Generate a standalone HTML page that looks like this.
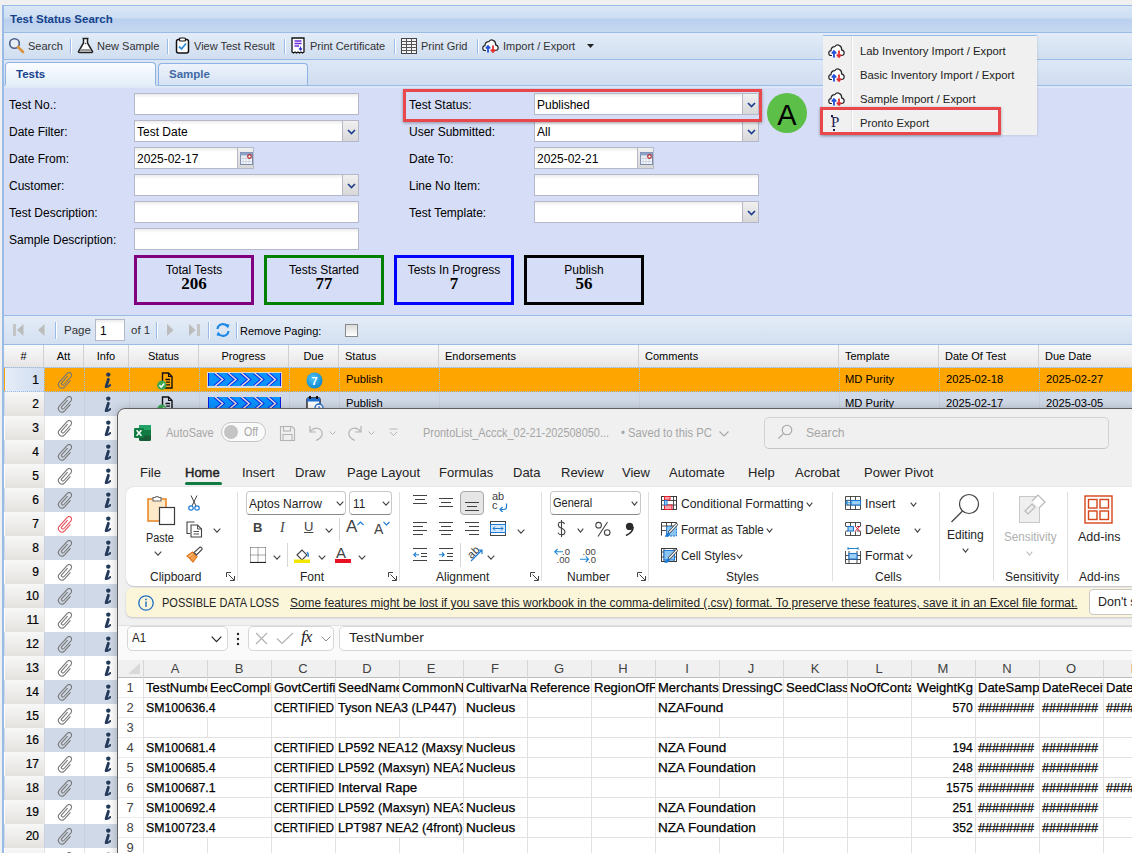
<!DOCTYPE html>
<html><head><meta charset="utf-8">
<style>
*{box-sizing:border-box;margin:0;padding:0}
html,body{width:1132px;height:853px;overflow:hidden;background:#f0f0f0;font-family:"Liberation Sans",sans-serif;font-size:12px;color:#000}
.a{position:absolute;white-space:nowrap}
#panel{position:absolute;left:2px;top:5px;width:1140px;height:860px;border-left:1px solid #99bbe8;border-top:1px solid #99bbe8;background:#d6dcf6}
#hdr{left:3px;top:6px;width:1129px;height:27px;background:linear-gradient(#dae7f6 0,#cddef3 45%,#b9d0ee 50%,#c6d9f1 100%);border-bottom:1px solid #99bbe8}
#hdr span{position:absolute;left:7px;top:7px;font-weight:bold;font-size:11.5px;color:#15428b}
#tb{left:3px;top:33px;width:1129px;height:27px;background:linear-gradient(#e3ecf8,#d0def0);border-bottom:1px solid #99bbe8}
.tbt{position:absolute;top:7px;font-size:11px;color:#333}
.sep{position:absolute;top:6px;width:1px;height:15px;background:#99bbe8;box-shadow:1px 0 0 #fff}
#tabs{left:3px;top:60px;width:1129px;height:28px;background:linear-gradient(#dde8f6,#cfdcef)}
.tab{position:absolute;top:2px;height:26px;border:1px solid #8db2e3;border-bottom:none;border-radius:4px 4px 0 0;background:linear-gradient(#f3f7fd,#d9e6f7)}
.tab span{position:absolute;left:10px;top:7px;font-weight:bold;font-size:11.5px;color:#15428b}
#form{left:3px;top:88px;width:1129px;height:228px;background:#d6ddf6;border-bottom:1px solid #99bbe8}
.lbl{position:absolute;font-size:12px;color:#000}
.inp{position:absolute;height:22px;background:#fff;border:1px solid #b5b8c8;background:linear-gradient(#ececec 0,#fff 4px)}
.inp span{position:absolute;left:2px;top:4px;font-size:12px}
.trig{position:absolute;right:-1px;top:-1px;width:17px;height:22px;background:linear-gradient(#f0f0f0,#d8d8d8);border:1px solid #b5b8c8}
.ex{line-height:normal}
.cell{font-size:13px;line-height:15px;color:#000;-webkit-text-stroke:0.25px #000;white-space:nowrap;display:inline-block;transform-origin:left center}
</style></head><body>
<div id="panel"></div>
<div class="a" id="hdr"><span>Test Status Search</span></div>
<div class="a" id="tb">
 <svg class="a" style="left:5px;top:4px" width="17" height="17" viewBox="0 0 17 17"><circle cx="6.5" cy="6.5" r="4.8" fill="#e8eef5" stroke="#4a5f8a" stroke-width="1.6"/><path d="M10 10 L15 15" stroke="#d9953f" stroke-width="2.6" stroke-linecap="round"/></svg>
 <span class="tbt" style="left:25px">Search</span>
 <div class="sep" style="left:67px"></div>
 <svg class="a" style="left:74px;top:4px" width="17" height="17" viewBox="0 0 17 17"><path d="M5.5 1.5 H11.5 M6.5 1.5 V6 L1.5 14.5 Q1.2 15.5 2.5 15.5 H14.5 Q15.8 15.5 15.5 14.5 L10.5 6 V1.5" fill="#fff" stroke="#222" stroke-width="1.5"/><path d="M3.5 12 H13.5 L14.5 14.5 H2.5Z" fill="#999"/><circle cx="8.5" cy="6.5" r="0.8" fill="#555"/></svg>
 <span class="tbt" style="left:94px">New Sample</span>
 <div class="sep" style="left:164px"></div>
 <svg class="a" style="left:172px;top:4px" width="15" height="17" viewBox="0 0 15 17"><rect x="1.5" y="2.5" width="12" height="13.5" rx="2" fill="#fff" stroke="#111" stroke-width="1.5"/><rect x="4.5" y="1" width="6" height="3" rx="1" fill="#fff" stroke="#111" stroke-width="1.2"/><path d="M4 9.5 L6.5 12 L11 6.5" fill="none" stroke="#2e8fe0" stroke-width="1.8"/></svg>
 <span class="tbt" style="left:191px">View Test Result</span>
 <div class="sep" style="left:281px"></div>
 <svg class="a" style="left:288px;top:4px" width="14" height="17" viewBox="0 0 14 17"><path d="M1 1 H13 V15 L11.5 16 L10 15 L8.5 16 L7 15 L5.5 16 L4 15 L2.5 16 L1 15Z" fill="#fff" stroke="#111" stroke-width="1.3"/><path d="M3.5 4 H10.5 M3.5 6.5 H10.5 M3.5 9 H8" stroke="#6a2bd9" stroke-width="1.3"/><path d="M9.5 9.5 V13 M8 11.5 L9.5 13 L11 11.5" fill="none" stroke="#3030d0" stroke-width="1.2"/></svg>
 <span class="tbt" style="left:307px">Print Certificate</span>
 <div class="sep" style="left:391px"></div>
 <svg class="a" style="left:398px;top:4px" width="16" height="17" viewBox="0 0 16 17"><rect x="0.5" y="1.5" width="15" height="15" fill="#f4f4f4" stroke="#444"/><path d="M0.5 4.5 H15.5 M0.5 7.5 H15.5 M0.5 10.5 H15.5 M0.5 13.5 H15.5 M5.5 1.5 V16.5 M10.5 1.5 V16.5" stroke="#555" stroke-width="1"/></svg>
 <span class="tbt" style="left:418px">Print Grid</span>
 <div class="sep" style="left:474px"></div>
 <svg class="a" style="left:479px;top:5px" width="17" height="15" viewBox="0 0 17 15"><path d="M4 12.5 H2.8 Q0.8 12.5 0.8 10 Q0.8 7.8 3 7.6 Q3 3.8 6.8 3.6 Q8.8 1 11.5 2.6 Q14 3.8 13.6 6.8 Q16.2 7.4 16.2 10 Q16 12.5 13.5 12.5 H13" fill="#fff" stroke="#222" stroke-width="1.2"/><path d="M6 14.5 V8.5 M3.8 10.5 L6 8 L8.2 10.5" fill="none" stroke="#1e4fd8" stroke-width="1.8"/><path d="M11 7.5 V13.5 M8.8 11.5 L11 14 L13.2 11.5" fill="none" stroke="#e03030" stroke-width="1.8"/></svg>
 <span class="tbt" style="left:500px">Import / Export</span>
 <svg class="a" style="left:584px;top:11px" width="7" height="4" viewBox="0 0 7 4"><path d="M0 0 H7 L3.5 4Z" fill="#222"/></svg>
</div>
<div class="a" id="tabs">
 <div class="tab" style="left:2px;width:151px;height:24px;background:linear-gradient(#fbfdff,#e3edf9)"><span style="top:5px">Tests</span></div>
 <div class="tab" style="left:155px;width:150px;height:23px;top:3px;background:linear-gradient(#eef3fb,#d5e2f4)"><span style="left:10px;top:4px;color:#416aa5">Sample</span></div>
 <div style="position:absolute;left:0;top:25px;width:1129px;height:1px;background:#99bbe8"></div>
 <div style="position:absolute;left:0;top:26px;width:1129px;height:2px;background:#dfe8f6"></div>
 <div style="position:absolute;left:2px;top:25px;width:151px;height:1px;background:#e3edf9"></div>
</div>
<div class="a" id="form"></div>
<span class="a lbl" style="left:9px;top:98px">Test No.:</span>
<span class="a lbl" style="left:9px;top:125px">Date Filter:</span>
<span class="a lbl" style="left:9px;top:152px">Date From:</span>
<span class="a lbl" style="left:9px;top:179px">Customer:</span>
<span class="a lbl" style="left:9px;top:206px">Test Description:</span>
<span class="a lbl" style="left:9px;top:233px">Sample Description:</span>
<div class="inp" style="left:134px;top:93px;width:225px"></div><div class="inp" style="left:134px;top:120px;width:225px"><span>Test Date</span><div class="trig"><svg style="position:absolute;left:4px;top:8px" width="9" height="6" viewBox="0 0 9 6"><path d="M1 1 L4.5 4.5 L8 1" fill="none" stroke="#1f3f8f" stroke-width="1.7"/></svg></div></div><div class="inp" style="left:134px;top:147px;width:120px"><span>2025-02-17</span><div class="trig"><svg style="position:absolute;left:2px;top:4px" width="13" height="13" viewBox="0 0 13 13"><rect x="0.5" y="0.5" width="12" height="12" fill="#f4f6fa" stroke="#7a8aa8"/><rect x="0.5" y="0.5" width="12" height="3" fill="#8ea2c8"/><path d="M3 3.5 V12 M6 3.5 V12 M9 3.5 V12 M0.5 6.5 H12 M0.5 9.5 H12" stroke="#c8d0e0" stroke-width="0.8"/><circle cx="9.5" cy="4.5" r="1.8" fill="#fff" stroke="#b02020" stroke-width="1.2"/></svg></div></div><div class="inp" style="left:134px;top:174px;width:225px"><div class="trig"><svg style="position:absolute;left:4px;top:8px" width="9" height="6" viewBox="0 0 9 6"><path d="M1 1 L4.5 4.5 L8 1" fill="none" stroke="#1f3f8f" stroke-width="1.7"/></svg></div></div><div class="inp" style="left:134px;top:201px;width:225px"></div><div class="inp" style="left:134px;top:228px;width:225px"></div><span class="a lbl" style="left:409px;top:98px">Test Status:</span>
<span class="a lbl" style="left:409px;top:125px">User Submitted:</span>
<span class="a lbl" style="left:409px;top:152px">Date To:</span>
<span class="a lbl" style="left:409px;top:179px">Line No Item:</span>
<span class="a lbl" style="left:409px;top:206px">Test Template:</span>
<div class="inp" style="left:534px;top:93px;width:225px"><span>Published</span><div class="trig"><svg style="position:absolute;left:4px;top:8px" width="9" height="6" viewBox="0 0 9 6"><path d="M1 1 L4.5 4.5 L8 1" fill="none" stroke="#1f3f8f" stroke-width="1.7"/></svg></div></div><div class="inp" style="left:534px;top:120px;width:225px"><span>All</span><div class="trig"><svg style="position:absolute;left:4px;top:8px" width="9" height="6" viewBox="0 0 9 6"><path d="M1 1 L4.5 4.5 L8 1" fill="none" stroke="#1f3f8f" stroke-width="1.7"/></svg></div></div><div class="inp" style="left:534px;top:147px;width:120px"><span>2025-02-21</span><div class="trig"><svg style="position:absolute;left:2px;top:4px" width="13" height="13" viewBox="0 0 13 13"><rect x="0.5" y="0.5" width="12" height="12" fill="#f4f6fa" stroke="#7a8aa8"/><rect x="0.5" y="0.5" width="12" height="3" fill="#8ea2c8"/><path d="M3 3.5 V12 M6 3.5 V12 M9 3.5 V12 M0.5 6.5 H12 M0.5 9.5 H12" stroke="#c8d0e0" stroke-width="0.8"/><circle cx="9.5" cy="4.5" r="1.8" fill="#fff" stroke="#b02020" stroke-width="1.2"/></svg></div></div><div class="inp" style="left:534px;top:174px;width:225px"></div><div class="inp" style="left:534px;top:201px;width:225px"><div class="trig"><svg style="position:absolute;left:4px;top:8px" width="9" height="6" viewBox="0 0 9 6"><path d="M1 1 L4.5 4.5 L8 1" fill="none" stroke="#1f3f8f" stroke-width="1.7"/></svg></div></div><div class="a" style="left:403px;top:89px;width:359px;height:33px;border:3px solid #e8474c;box-shadow:0 1px 3px rgba(0,0,0,.35)"></div>
<div class="a" style="left:767px;top:93px;width:40px;height:40px;border-radius:50%;background:#5cbf48"><span style="position:absolute;left:0;width:40px;top:6px;text-align:center;font-size:29px;color:#000">A</span></div>
<div class="a" style="left:134px;top:255px;width:120px;height:50px;border:3px solid #800080"><span style="position:absolute;left:0;width:114px;top:5px;text-align:center;font-size:12px">Total Tests</span><span style="position:absolute;left:0;width:114px;top:16px;text-align:center;font-size:17px;font-weight:bold;font-family:'Liberation Serif',serif">206</span></div>
<div class="a" style="left:264px;top:255px;width:120px;height:50px;border:3px solid #008000"><span style="position:absolute;left:0;width:114px;top:5px;text-align:center;font-size:12px">Tests Started</span><span style="position:absolute;left:0;width:114px;top:16px;text-align:center;font-size:17px;font-weight:bold;font-family:'Liberation Serif',serif">77</span></div>
<div class="a" style="left:394px;top:255px;width:120px;height:50px;border:3px solid #0000ff"><span style="position:absolute;left:0;width:114px;top:5px;text-align:center;font-size:12px">Tests In Progress</span><span style="position:absolute;left:0;width:114px;top:16px;text-align:center;font-size:17px;font-weight:bold;font-family:'Liberation Serif',serif">7</span></div>
<div class="a" style="left:524px;top:255px;width:120px;height:50px;border:3px solid #000"><span style="position:absolute;left:0;width:114px;top:5px;text-align:center;font-size:12px">Publish</span><span style="position:absolute;left:0;width:114px;top:16px;text-align:center;font-size:17px;font-weight:bold;font-family:'Liberation Serif',serif">56</span></div>
<div class="a" id="pg" style="left:3px;top:316px;width:1129px;height:29px;background:linear-gradient(#e4ecf7,#d3e0f1);border-bottom:1px solid #99bbe8">
 <svg class="a" style="left:10px;top:8px" width="11" height="12" viewBox="0 0 11 12"><rect x="0" y="0" width="3" height="12" fill="#c4c4c4"/><path d="M4 6 L10.5 0 V12Z" fill="#bcbcbc"/></svg>
 <svg class="a" style="left:35px;top:8px" width="7" height="12" viewBox="0 0 7 12"><path d="M0 6 L6.5 0 V12Z" fill="#bcbcbc"/></svg>
 <div class="sep" style="left:52px;top:6px;height:17px"></div>
 <span class="tbt" style="left:61px;top:8px;font-size:11.5px;color:#333">Page</span>
 <div class="inp" style="left:92px;top:3px;width:30px;height:22px"><span style="left:4px;top:4px">1</span></div>
 <span class="tbt" style="left:128px;top:8px;font-size:11.5px;color:#333">of 1</span>
 <div class="sep" style="left:153px;top:6px;height:17px"></div>
 <svg class="a" style="left:164px;top:8px" width="7" height="12" viewBox="0 0 7 12"><path d="M6.5 6 L0 0 V12Z" fill="#bcbcbc"/></svg>
 <svg class="a" style="left:186px;top:8px" width="11" height="12" viewBox="0 0 11 12"><rect x="8" y="0" width="3" height="12" fill="#c4c4c4"/><path d="M6.5 6 L0 0 V12Z" fill="#bcbcbc"/></svg>
 <div class="sep" style="left:205px;top:6px;height:17px"></div>
 <svg class="a" style="left:212px;top:6px" width="16" height="16" viewBox="0 0 16 16"><path d="M2.5 7 A5.5 5.5 0 0 1 12.5 4.5" fill="none" stroke="#1e88e5" stroke-width="2.2"/><path d="M10 2 L14.5 2.5 L13 6.5Z" fill="#1e88e5"/><path d="M13.5 9 A5.5 5.5 0 0 1 3.5 11.5" fill="none" stroke="#1e88e5" stroke-width="2.2"/><path d="M6 14 L1.5 13.5 L3 9.5Z" fill="#1e88e5"/></svg>
 <div class="sep" style="left:233px;top:6px;height:17px"></div>
 <span class="tbt" style="left:237px;top:9px;font-size:11px;color:#000">Remove Paging:</span>
 <div class="a" style="left:342px;top:8px;width:13px;height:13px;border:1px solid #8a8a8a;background:linear-gradient(#dcdcdc,#fff)"></div>
</div>
<div class="a" style="left:4px;top:345px;width:1128px;height:23px;background:linear-gradient(#f9f9f9,#e6e6e6);border-bottom:1px solid #d0d0d0"></div>
<div class="a" style="left:4px;top:345px;width:40px;height:23px;border-right:1px solid #d0d0d0;text-align:center"><span style="position:relative;top:4px;font-size:11px">#</span></div>
<div class="a" style="left:44px;top:345px;width:40px;height:23px;border-right:1px solid #d0d0d0;text-align:center"><span style="position:relative;top:4px;font-size:11px">Att</span></div>
<div class="a" style="left:84px;top:345px;width:45px;height:23px;border-right:1px solid #d0d0d0;text-align:center"><span style="position:relative;top:4px;font-size:11px">Info</span></div>
<div class="a" style="left:129px;top:345px;width:70px;height:23px;border-right:1px solid #d0d0d0;text-align:center"><span style="position:relative;top:4px;font-size:11px">Status</span></div>
<div class="a" style="left:199px;top:345px;width:90px;height:23px;border-right:1px solid #d0d0d0;text-align:center"><span style="position:relative;top:4px;font-size:11px">Progress</span></div>
<div class="a" style="left:289px;top:345px;width:50px;height:23px;border-right:1px solid #d0d0d0;text-align:center"><span style="position:relative;top:4px;font-size:11px">Due</span></div>
<div class="a" style="left:339px;top:345px;width:100px;height:23px;border-right:1px solid #d0d0d0"><span style="position:absolute;left:6px;top:5px;font-size:11px">Status</span></div>
<div class="a" style="left:439px;top:345px;width:200px;height:23px;border-right:1px solid #d0d0d0"><span style="position:absolute;left:6px;top:5px;font-size:11px">Endorsements</span></div>
<div class="a" style="left:639px;top:345px;width:200px;height:23px;border-right:1px solid #d0d0d0"><span style="position:absolute;left:6px;top:5px;font-size:11px">Comments</span></div>
<div class="a" style="left:839px;top:345px;width:100px;height:23px;border-right:1px solid #d0d0d0"><span style="position:absolute;left:6px;top:5px;font-size:11px">Template</span></div>
<div class="a" style="left:939px;top:345px;width:100px;height:23px;border-right:1px solid #d0d0d0"><span style="position:absolute;left:6px;top:5px;font-size:11px">Date Of Test</span></div>
<div class="a" style="left:1039px;top:345px;width:101px;height:23px;border-right:1px solid #d0d0d0"><span style="position:absolute;left:6px;top:5px;font-size:11px">Due Date</span></div>
<div class="a" style="left:4px;top:368px;width:1128px;height:24px;background:#ffa500"></div><div class="a" style="left:5px;top:368px;width:39px;height:24px;background:linear-gradient(to right,#e5edf8,#cfdcef)"><span style="position:absolute;right:5px;top:5px;font-size:12px;-webkit-text-stroke:0.2px #000">1</span></div><div class="a" style="left:44px;top:368px;width:0;height:24px;border-left:1px dotted #a9c3e6"></div><div class="a" style="left:84px;top:368px;width:0;height:24px;border-left:1px dotted #a9c3e6"></div><div class="a" style="left:129px;top:368px;width:0;height:24px;border-left:1px dotted #a9c3e6"></div><div class="a" style="left:199px;top:368px;width:0;height:24px;border-left:1px dotted #a9c3e6"></div><div class="a" style="left:289px;top:368px;width:0;height:24px;border-left:1px dotted #a9c3e6"></div><div class="a" style="left:339px;top:368px;width:0;height:24px;border-left:1px dotted #a9c3e6"></div><div class="a" style="left:439px;top:368px;width:0;height:24px;border-left:1px dotted #a9c3e6"></div><div class="a" style="left:639px;top:368px;width:0;height:24px;border-left:1px dotted #a9c3e6"></div><div class="a" style="left:839px;top:368px;width:0;height:24px;border-left:1px dotted #a9c3e6"></div><div class="a" style="left:939px;top:368px;width:0;height:24px;border-left:1px dotted #a9c3e6"></div><div class="a" style="left:1039px;top:368px;width:0;height:24px;border-left:1px dotted #a9c3e6"></div><svg class="a" style="left:57px;top:372px" width="17" height="17" viewBox="0 0 17 17"><path transform="translate(8.5 8.6) rotate(42) translate(-5 -9.7)" d="M3.6 5 V13.6 A1.45 1.45 0 0 0 6.5 13.6 V3.2 A2.5 2.5 0 0 0 1.5 3.2 V15 A3.5 3.5 0 0 0 8.5 15 V6.2" fill="none" stroke="#777" stroke-width="1.1"/></svg><svg class="a" style="left:103px;top:372px" width="8" height="17" viewBox="0 0 8 17"><circle cx="5.3" cy="2.6" r="2.2" fill="#233a5a"/><path d="M5.4 7.3 L3.3 14.2" stroke="#233a5a" stroke-width="2.9" stroke-linecap="round"/><path d="M2.6 15 Q5 15.3 7.4 12.9" fill="none" stroke="#233a5a" stroke-width="1.9" stroke-linecap="round"/></svg>
<div class="a" style="left:4px;top:392px;width:1128px;height:24px;background:#d0d9e7"></div><div class="a" style="left:5px;top:392px;width:39px;height:24px;background:linear-gradient(#f7f7f7,#e4e2df)"><span style="position:absolute;right:5px;top:5px;font-size:12px;-webkit-text-stroke:0.2px #000">2</span></div><div class="a" style="left:44px;top:392px;width:1px;height:24px;background:#c8d0dc"></div><div class="a" style="left:84px;top:392px;width:1px;height:24px;background:#c8d0dc"></div><div class="a" style="left:129px;top:392px;width:1px;height:24px;background:#c8d0dc"></div><div class="a" style="left:199px;top:392px;width:1px;height:24px;background:#c8d0dc"></div><div class="a" style="left:289px;top:392px;width:1px;height:24px;background:#c8d0dc"></div><div class="a" style="left:339px;top:392px;width:1px;height:24px;background:#c8d0dc"></div><div class="a" style="left:439px;top:392px;width:1px;height:24px;background:#c8d0dc"></div><div class="a" style="left:639px;top:392px;width:1px;height:24px;background:#c8d0dc"></div><div class="a" style="left:839px;top:392px;width:1px;height:24px;background:#c8d0dc"></div><div class="a" style="left:939px;top:392px;width:1px;height:24px;background:#c8d0dc"></div><div class="a" style="left:1039px;top:392px;width:1px;height:24px;background:#c8d0dc"></div><svg class="a" style="left:57px;top:396px" width="17" height="17" viewBox="0 0 17 17"><path transform="translate(8.5 8.6) rotate(42) translate(-5 -9.7)" d="M3.6 5 V13.6 A1.45 1.45 0 0 0 6.5 13.6 V3.2 A2.5 2.5 0 0 0 1.5 3.2 V15 A3.5 3.5 0 0 0 8.5 15 V6.2" fill="none" stroke="#777" stroke-width="1.1"/></svg><svg class="a" style="left:103px;top:396px" width="8" height="17" viewBox="0 0 8 17"><circle cx="5.3" cy="2.6" r="2.2" fill="#233a5a"/><path d="M5.4 7.3 L3.3 14.2" stroke="#233a5a" stroke-width="2.9" stroke-linecap="round"/><path d="M2.6 15 Q5 15.3 7.4 12.9" fill="none" stroke="#233a5a" stroke-width="1.9" stroke-linecap="round"/></svg>
<div class="a" style="left:4px;top:416px;width:1128px;height:24px;background:#ffffff"></div><div class="a" style="left:5px;top:416px;width:39px;height:24px;background:linear-gradient(#f7f7f7,#e4e2df)"><span style="position:absolute;right:5px;top:5px;font-size:12px;-webkit-text-stroke:0.2px #000">3</span></div><div class="a" style="left:44px;top:416px;width:1px;height:24px;background:#e3e3e3"></div><div class="a" style="left:84px;top:416px;width:1px;height:24px;background:#e3e3e3"></div><div class="a" style="left:129px;top:416px;width:1px;height:24px;background:#e3e3e3"></div><div class="a" style="left:199px;top:416px;width:1px;height:24px;background:#e3e3e3"></div><div class="a" style="left:289px;top:416px;width:1px;height:24px;background:#e3e3e3"></div><div class="a" style="left:339px;top:416px;width:1px;height:24px;background:#e3e3e3"></div><div class="a" style="left:439px;top:416px;width:1px;height:24px;background:#e3e3e3"></div><div class="a" style="left:639px;top:416px;width:1px;height:24px;background:#e3e3e3"></div><div class="a" style="left:839px;top:416px;width:1px;height:24px;background:#e3e3e3"></div><div class="a" style="left:939px;top:416px;width:1px;height:24px;background:#e3e3e3"></div><div class="a" style="left:1039px;top:416px;width:1px;height:24px;background:#e3e3e3"></div><svg class="a" style="left:57px;top:420px" width="17" height="17" viewBox="0 0 17 17"><path transform="translate(8.5 8.6) rotate(42) translate(-5 -9.7)" d="M3.6 5 V13.6 A1.45 1.45 0 0 0 6.5 13.6 V3.2 A2.5 2.5 0 0 0 1.5 3.2 V15 A3.5 3.5 0 0 0 8.5 15 V6.2" fill="none" stroke="#777" stroke-width="1.1"/></svg><svg class="a" style="left:103px;top:420px" width="8" height="17" viewBox="0 0 8 17"><circle cx="5.3" cy="2.6" r="2.2" fill="#233a5a"/><path d="M5.4 7.3 L3.3 14.2" stroke="#233a5a" stroke-width="2.9" stroke-linecap="round"/><path d="M2.6 15 Q5 15.3 7.4 12.9" fill="none" stroke="#233a5a" stroke-width="1.9" stroke-linecap="round"/></svg>
<div class="a" style="left:4px;top:440px;width:1128px;height:24px;background:#d0d9e7"></div><div class="a" style="left:5px;top:440px;width:39px;height:24px;background:linear-gradient(#f7f7f7,#e4e2df)"><span style="position:absolute;right:5px;top:5px;font-size:12px;-webkit-text-stroke:0.2px #000">4</span></div><div class="a" style="left:44px;top:440px;width:1px;height:24px;background:#c8d0dc"></div><div class="a" style="left:84px;top:440px;width:1px;height:24px;background:#c8d0dc"></div><div class="a" style="left:129px;top:440px;width:1px;height:24px;background:#c8d0dc"></div><div class="a" style="left:199px;top:440px;width:1px;height:24px;background:#c8d0dc"></div><div class="a" style="left:289px;top:440px;width:1px;height:24px;background:#c8d0dc"></div><div class="a" style="left:339px;top:440px;width:1px;height:24px;background:#c8d0dc"></div><div class="a" style="left:439px;top:440px;width:1px;height:24px;background:#c8d0dc"></div><div class="a" style="left:639px;top:440px;width:1px;height:24px;background:#c8d0dc"></div><div class="a" style="left:839px;top:440px;width:1px;height:24px;background:#c8d0dc"></div><div class="a" style="left:939px;top:440px;width:1px;height:24px;background:#c8d0dc"></div><div class="a" style="left:1039px;top:440px;width:1px;height:24px;background:#c8d0dc"></div><svg class="a" style="left:57px;top:444px" width="17" height="17" viewBox="0 0 17 17"><path transform="translate(8.5 8.6) rotate(42) translate(-5 -9.7)" d="M3.6 5 V13.6 A1.45 1.45 0 0 0 6.5 13.6 V3.2 A2.5 2.5 0 0 0 1.5 3.2 V15 A3.5 3.5 0 0 0 8.5 15 V6.2" fill="none" stroke="#777" stroke-width="1.1"/></svg><svg class="a" style="left:103px;top:444px" width="8" height="17" viewBox="0 0 8 17"><circle cx="5.3" cy="2.6" r="2.2" fill="#233a5a"/><path d="M5.4 7.3 L3.3 14.2" stroke="#233a5a" stroke-width="2.9" stroke-linecap="round"/><path d="M2.6 15 Q5 15.3 7.4 12.9" fill="none" stroke="#233a5a" stroke-width="1.9" stroke-linecap="round"/></svg>
<div class="a" style="left:4px;top:464px;width:1128px;height:24px;background:#ffffff"></div><div class="a" style="left:5px;top:464px;width:39px;height:24px;background:linear-gradient(#f7f7f7,#e4e2df)"><span style="position:absolute;right:5px;top:5px;font-size:12px;-webkit-text-stroke:0.2px #000">5</span></div><div class="a" style="left:44px;top:464px;width:1px;height:24px;background:#e3e3e3"></div><div class="a" style="left:84px;top:464px;width:1px;height:24px;background:#e3e3e3"></div><div class="a" style="left:129px;top:464px;width:1px;height:24px;background:#e3e3e3"></div><div class="a" style="left:199px;top:464px;width:1px;height:24px;background:#e3e3e3"></div><div class="a" style="left:289px;top:464px;width:1px;height:24px;background:#e3e3e3"></div><div class="a" style="left:339px;top:464px;width:1px;height:24px;background:#e3e3e3"></div><div class="a" style="left:439px;top:464px;width:1px;height:24px;background:#e3e3e3"></div><div class="a" style="left:639px;top:464px;width:1px;height:24px;background:#e3e3e3"></div><div class="a" style="left:839px;top:464px;width:1px;height:24px;background:#e3e3e3"></div><div class="a" style="left:939px;top:464px;width:1px;height:24px;background:#e3e3e3"></div><div class="a" style="left:1039px;top:464px;width:1px;height:24px;background:#e3e3e3"></div><svg class="a" style="left:57px;top:468px" width="17" height="17" viewBox="0 0 17 17"><path transform="translate(8.5 8.6) rotate(42) translate(-5 -9.7)" d="M3.6 5 V13.6 A1.45 1.45 0 0 0 6.5 13.6 V3.2 A2.5 2.5 0 0 0 1.5 3.2 V15 A3.5 3.5 0 0 0 8.5 15 V6.2" fill="none" stroke="#777" stroke-width="1.1"/></svg><svg class="a" style="left:103px;top:468px" width="8" height="17" viewBox="0 0 8 17"><circle cx="5.3" cy="2.6" r="2.2" fill="#233a5a"/><path d="M5.4 7.3 L3.3 14.2" stroke="#233a5a" stroke-width="2.9" stroke-linecap="round"/><path d="M2.6 15 Q5 15.3 7.4 12.9" fill="none" stroke="#233a5a" stroke-width="1.9" stroke-linecap="round"/></svg>
<div class="a" style="left:4px;top:488px;width:1128px;height:24px;background:#d0d9e7"></div><div class="a" style="left:5px;top:488px;width:39px;height:24px;background:linear-gradient(#f7f7f7,#e4e2df)"><span style="position:absolute;right:5px;top:5px;font-size:12px;-webkit-text-stroke:0.2px #000">6</span></div><div class="a" style="left:44px;top:488px;width:1px;height:24px;background:#c8d0dc"></div><div class="a" style="left:84px;top:488px;width:1px;height:24px;background:#c8d0dc"></div><div class="a" style="left:129px;top:488px;width:1px;height:24px;background:#c8d0dc"></div><div class="a" style="left:199px;top:488px;width:1px;height:24px;background:#c8d0dc"></div><div class="a" style="left:289px;top:488px;width:1px;height:24px;background:#c8d0dc"></div><div class="a" style="left:339px;top:488px;width:1px;height:24px;background:#c8d0dc"></div><div class="a" style="left:439px;top:488px;width:1px;height:24px;background:#c8d0dc"></div><div class="a" style="left:639px;top:488px;width:1px;height:24px;background:#c8d0dc"></div><div class="a" style="left:839px;top:488px;width:1px;height:24px;background:#c8d0dc"></div><div class="a" style="left:939px;top:488px;width:1px;height:24px;background:#c8d0dc"></div><div class="a" style="left:1039px;top:488px;width:1px;height:24px;background:#c8d0dc"></div><svg class="a" style="left:57px;top:492px" width="17" height="17" viewBox="0 0 17 17"><path transform="translate(8.5 8.6) rotate(42) translate(-5 -9.7)" d="M3.6 5 V13.6 A1.45 1.45 0 0 0 6.5 13.6 V3.2 A2.5 2.5 0 0 0 1.5 3.2 V15 A3.5 3.5 0 0 0 8.5 15 V6.2" fill="none" stroke="#777" stroke-width="1.1"/></svg><svg class="a" style="left:103px;top:492px" width="8" height="17" viewBox="0 0 8 17"><circle cx="5.3" cy="2.6" r="2.2" fill="#233a5a"/><path d="M5.4 7.3 L3.3 14.2" stroke="#233a5a" stroke-width="2.9" stroke-linecap="round"/><path d="M2.6 15 Q5 15.3 7.4 12.9" fill="none" stroke="#233a5a" stroke-width="1.9" stroke-linecap="round"/></svg>
<div class="a" style="left:4px;top:512px;width:1128px;height:24px;background:#ffffff"></div><div class="a" style="left:5px;top:512px;width:39px;height:24px;background:linear-gradient(#f7f7f7,#e4e2df)"><span style="position:absolute;right:5px;top:5px;font-size:12px;-webkit-text-stroke:0.2px #000">7</span></div><div class="a" style="left:44px;top:512px;width:1px;height:24px;background:#e3e3e3"></div><div class="a" style="left:84px;top:512px;width:1px;height:24px;background:#e3e3e3"></div><div class="a" style="left:129px;top:512px;width:1px;height:24px;background:#e3e3e3"></div><div class="a" style="left:199px;top:512px;width:1px;height:24px;background:#e3e3e3"></div><div class="a" style="left:289px;top:512px;width:1px;height:24px;background:#e3e3e3"></div><div class="a" style="left:339px;top:512px;width:1px;height:24px;background:#e3e3e3"></div><div class="a" style="left:439px;top:512px;width:1px;height:24px;background:#e3e3e3"></div><div class="a" style="left:639px;top:512px;width:1px;height:24px;background:#e3e3e3"></div><div class="a" style="left:839px;top:512px;width:1px;height:24px;background:#e3e3e3"></div><div class="a" style="left:939px;top:512px;width:1px;height:24px;background:#e3e3e3"></div><div class="a" style="left:1039px;top:512px;width:1px;height:24px;background:#e3e3e3"></div><svg class="a" style="left:57px;top:516px" width="17" height="17" viewBox="0 0 17 17"><path transform="translate(8.5 8.6) rotate(42) translate(-5 -9.7)" d="M3.6 5 V13.6 A1.45 1.45 0 0 0 6.5 13.6 V3.2 A2.5 2.5 0 0 0 1.5 3.2 V15 A3.5 3.5 0 0 0 8.5 15 V6.2" fill="none" stroke="#e8505b" stroke-width="1.1"/></svg><svg class="a" style="left:103px;top:516px" width="8" height="17" viewBox="0 0 8 17"><circle cx="5.3" cy="2.6" r="2.2" fill="#233a5a"/><path d="M5.4 7.3 L3.3 14.2" stroke="#233a5a" stroke-width="2.9" stroke-linecap="round"/><path d="M2.6 15 Q5 15.3 7.4 12.9" fill="none" stroke="#233a5a" stroke-width="1.9" stroke-linecap="round"/></svg>
<div class="a" style="left:4px;top:536px;width:1128px;height:24px;background:#d0d9e7"></div><div class="a" style="left:5px;top:536px;width:39px;height:24px;background:linear-gradient(#f7f7f7,#e4e2df)"><span style="position:absolute;right:5px;top:5px;font-size:12px;-webkit-text-stroke:0.2px #000">8</span></div><div class="a" style="left:44px;top:536px;width:1px;height:24px;background:#c8d0dc"></div><div class="a" style="left:84px;top:536px;width:1px;height:24px;background:#c8d0dc"></div><div class="a" style="left:129px;top:536px;width:1px;height:24px;background:#c8d0dc"></div><div class="a" style="left:199px;top:536px;width:1px;height:24px;background:#c8d0dc"></div><div class="a" style="left:289px;top:536px;width:1px;height:24px;background:#c8d0dc"></div><div class="a" style="left:339px;top:536px;width:1px;height:24px;background:#c8d0dc"></div><div class="a" style="left:439px;top:536px;width:1px;height:24px;background:#c8d0dc"></div><div class="a" style="left:639px;top:536px;width:1px;height:24px;background:#c8d0dc"></div><div class="a" style="left:839px;top:536px;width:1px;height:24px;background:#c8d0dc"></div><div class="a" style="left:939px;top:536px;width:1px;height:24px;background:#c8d0dc"></div><div class="a" style="left:1039px;top:536px;width:1px;height:24px;background:#c8d0dc"></div><svg class="a" style="left:57px;top:540px" width="17" height="17" viewBox="0 0 17 17"><path transform="translate(8.5 8.6) rotate(42) translate(-5 -9.7)" d="M3.6 5 V13.6 A1.45 1.45 0 0 0 6.5 13.6 V3.2 A2.5 2.5 0 0 0 1.5 3.2 V15 A3.5 3.5 0 0 0 8.5 15 V6.2" fill="none" stroke="#777" stroke-width="1.1"/></svg><svg class="a" style="left:103px;top:540px" width="8" height="17" viewBox="0 0 8 17"><circle cx="5.3" cy="2.6" r="2.2" fill="#233a5a"/><path d="M5.4 7.3 L3.3 14.2" stroke="#233a5a" stroke-width="2.9" stroke-linecap="round"/><path d="M2.6 15 Q5 15.3 7.4 12.9" fill="none" stroke="#233a5a" stroke-width="1.9" stroke-linecap="round"/></svg>
<div class="a" style="left:4px;top:560px;width:1128px;height:24px;background:#ffffff"></div><div class="a" style="left:5px;top:560px;width:39px;height:24px;background:linear-gradient(#f7f7f7,#e4e2df)"><span style="position:absolute;right:5px;top:5px;font-size:12px;-webkit-text-stroke:0.2px #000">9</span></div><div class="a" style="left:44px;top:560px;width:1px;height:24px;background:#e3e3e3"></div><div class="a" style="left:84px;top:560px;width:1px;height:24px;background:#e3e3e3"></div><div class="a" style="left:129px;top:560px;width:1px;height:24px;background:#e3e3e3"></div><div class="a" style="left:199px;top:560px;width:1px;height:24px;background:#e3e3e3"></div><div class="a" style="left:289px;top:560px;width:1px;height:24px;background:#e3e3e3"></div><div class="a" style="left:339px;top:560px;width:1px;height:24px;background:#e3e3e3"></div><div class="a" style="left:439px;top:560px;width:1px;height:24px;background:#e3e3e3"></div><div class="a" style="left:639px;top:560px;width:1px;height:24px;background:#e3e3e3"></div><div class="a" style="left:839px;top:560px;width:1px;height:24px;background:#e3e3e3"></div><div class="a" style="left:939px;top:560px;width:1px;height:24px;background:#e3e3e3"></div><div class="a" style="left:1039px;top:560px;width:1px;height:24px;background:#e3e3e3"></div><svg class="a" style="left:57px;top:564px" width="17" height="17" viewBox="0 0 17 17"><path transform="translate(8.5 8.6) rotate(42) translate(-5 -9.7)" d="M3.6 5 V13.6 A1.45 1.45 0 0 0 6.5 13.6 V3.2 A2.5 2.5 0 0 0 1.5 3.2 V15 A3.5 3.5 0 0 0 8.5 15 V6.2" fill="none" stroke="#777" stroke-width="1.1"/></svg><svg class="a" style="left:103px;top:564px" width="8" height="17" viewBox="0 0 8 17"><circle cx="5.3" cy="2.6" r="2.2" fill="#233a5a"/><path d="M5.4 7.3 L3.3 14.2" stroke="#233a5a" stroke-width="2.9" stroke-linecap="round"/><path d="M2.6 15 Q5 15.3 7.4 12.9" fill="none" stroke="#233a5a" stroke-width="1.9" stroke-linecap="round"/></svg>
<div class="a" style="left:4px;top:584px;width:1128px;height:24px;background:#d0d9e7"></div><div class="a" style="left:5px;top:584px;width:39px;height:24px;background:linear-gradient(#f7f7f7,#e4e2df)"><span style="position:absolute;right:5px;top:5px;font-size:12px;-webkit-text-stroke:0.2px #000">10</span></div><div class="a" style="left:44px;top:584px;width:1px;height:24px;background:#c8d0dc"></div><div class="a" style="left:84px;top:584px;width:1px;height:24px;background:#c8d0dc"></div><div class="a" style="left:129px;top:584px;width:1px;height:24px;background:#c8d0dc"></div><div class="a" style="left:199px;top:584px;width:1px;height:24px;background:#c8d0dc"></div><div class="a" style="left:289px;top:584px;width:1px;height:24px;background:#c8d0dc"></div><div class="a" style="left:339px;top:584px;width:1px;height:24px;background:#c8d0dc"></div><div class="a" style="left:439px;top:584px;width:1px;height:24px;background:#c8d0dc"></div><div class="a" style="left:639px;top:584px;width:1px;height:24px;background:#c8d0dc"></div><div class="a" style="left:839px;top:584px;width:1px;height:24px;background:#c8d0dc"></div><div class="a" style="left:939px;top:584px;width:1px;height:24px;background:#c8d0dc"></div><div class="a" style="left:1039px;top:584px;width:1px;height:24px;background:#c8d0dc"></div><svg class="a" style="left:57px;top:588px" width="17" height="17" viewBox="0 0 17 17"><path transform="translate(8.5 8.6) rotate(42) translate(-5 -9.7)" d="M3.6 5 V13.6 A1.45 1.45 0 0 0 6.5 13.6 V3.2 A2.5 2.5 0 0 0 1.5 3.2 V15 A3.5 3.5 0 0 0 8.5 15 V6.2" fill="none" stroke="#777" stroke-width="1.1"/></svg><svg class="a" style="left:103px;top:588px" width="8" height="17" viewBox="0 0 8 17"><circle cx="5.3" cy="2.6" r="2.2" fill="#233a5a"/><path d="M5.4 7.3 L3.3 14.2" stroke="#233a5a" stroke-width="2.9" stroke-linecap="round"/><path d="M2.6 15 Q5 15.3 7.4 12.9" fill="none" stroke="#233a5a" stroke-width="1.9" stroke-linecap="round"/></svg>
<div class="a" style="left:4px;top:608px;width:1128px;height:24px;background:#ffffff"></div><div class="a" style="left:5px;top:608px;width:39px;height:24px;background:linear-gradient(#f7f7f7,#e4e2df)"><span style="position:absolute;right:5px;top:5px;font-size:12px;-webkit-text-stroke:0.2px #000">11</span></div><div class="a" style="left:44px;top:608px;width:1px;height:24px;background:#e3e3e3"></div><div class="a" style="left:84px;top:608px;width:1px;height:24px;background:#e3e3e3"></div><div class="a" style="left:129px;top:608px;width:1px;height:24px;background:#e3e3e3"></div><div class="a" style="left:199px;top:608px;width:1px;height:24px;background:#e3e3e3"></div><div class="a" style="left:289px;top:608px;width:1px;height:24px;background:#e3e3e3"></div><div class="a" style="left:339px;top:608px;width:1px;height:24px;background:#e3e3e3"></div><div class="a" style="left:439px;top:608px;width:1px;height:24px;background:#e3e3e3"></div><div class="a" style="left:639px;top:608px;width:1px;height:24px;background:#e3e3e3"></div><div class="a" style="left:839px;top:608px;width:1px;height:24px;background:#e3e3e3"></div><div class="a" style="left:939px;top:608px;width:1px;height:24px;background:#e3e3e3"></div><div class="a" style="left:1039px;top:608px;width:1px;height:24px;background:#e3e3e3"></div><svg class="a" style="left:57px;top:612px" width="17" height="17" viewBox="0 0 17 17"><path transform="translate(8.5 8.6) rotate(42) translate(-5 -9.7)" d="M3.6 5 V13.6 A1.45 1.45 0 0 0 6.5 13.6 V3.2 A2.5 2.5 0 0 0 1.5 3.2 V15 A3.5 3.5 0 0 0 8.5 15 V6.2" fill="none" stroke="#777" stroke-width="1.1"/></svg><svg class="a" style="left:103px;top:612px" width="8" height="17" viewBox="0 0 8 17"><circle cx="5.3" cy="2.6" r="2.2" fill="#233a5a"/><path d="M5.4 7.3 L3.3 14.2" stroke="#233a5a" stroke-width="2.9" stroke-linecap="round"/><path d="M2.6 15 Q5 15.3 7.4 12.9" fill="none" stroke="#233a5a" stroke-width="1.9" stroke-linecap="round"/></svg>
<div class="a" style="left:4px;top:632px;width:1128px;height:24px;background:#d0d9e7"></div><div class="a" style="left:5px;top:632px;width:39px;height:24px;background:linear-gradient(#f7f7f7,#e4e2df)"><span style="position:absolute;right:5px;top:5px;font-size:12px;-webkit-text-stroke:0.2px #000">12</span></div><div class="a" style="left:44px;top:632px;width:1px;height:24px;background:#c8d0dc"></div><div class="a" style="left:84px;top:632px;width:1px;height:24px;background:#c8d0dc"></div><div class="a" style="left:129px;top:632px;width:1px;height:24px;background:#c8d0dc"></div><div class="a" style="left:199px;top:632px;width:1px;height:24px;background:#c8d0dc"></div><div class="a" style="left:289px;top:632px;width:1px;height:24px;background:#c8d0dc"></div><div class="a" style="left:339px;top:632px;width:1px;height:24px;background:#c8d0dc"></div><div class="a" style="left:439px;top:632px;width:1px;height:24px;background:#c8d0dc"></div><div class="a" style="left:639px;top:632px;width:1px;height:24px;background:#c8d0dc"></div><div class="a" style="left:839px;top:632px;width:1px;height:24px;background:#c8d0dc"></div><div class="a" style="left:939px;top:632px;width:1px;height:24px;background:#c8d0dc"></div><div class="a" style="left:1039px;top:632px;width:1px;height:24px;background:#c8d0dc"></div><svg class="a" style="left:57px;top:636px" width="17" height="17" viewBox="0 0 17 17"><path transform="translate(8.5 8.6) rotate(42) translate(-5 -9.7)" d="M3.6 5 V13.6 A1.45 1.45 0 0 0 6.5 13.6 V3.2 A2.5 2.5 0 0 0 1.5 3.2 V15 A3.5 3.5 0 0 0 8.5 15 V6.2" fill="none" stroke="#777" stroke-width="1.1"/></svg><svg class="a" style="left:103px;top:636px" width="8" height="17" viewBox="0 0 8 17"><circle cx="5.3" cy="2.6" r="2.2" fill="#233a5a"/><path d="M5.4 7.3 L3.3 14.2" stroke="#233a5a" stroke-width="2.9" stroke-linecap="round"/><path d="M2.6 15 Q5 15.3 7.4 12.9" fill="none" stroke="#233a5a" stroke-width="1.9" stroke-linecap="round"/></svg>
<div class="a" style="left:4px;top:656px;width:1128px;height:24px;background:#ffffff"></div><div class="a" style="left:5px;top:656px;width:39px;height:24px;background:linear-gradient(#f7f7f7,#e4e2df)"><span style="position:absolute;right:5px;top:5px;font-size:12px;-webkit-text-stroke:0.2px #000">13</span></div><div class="a" style="left:44px;top:656px;width:1px;height:24px;background:#e3e3e3"></div><div class="a" style="left:84px;top:656px;width:1px;height:24px;background:#e3e3e3"></div><div class="a" style="left:129px;top:656px;width:1px;height:24px;background:#e3e3e3"></div><div class="a" style="left:199px;top:656px;width:1px;height:24px;background:#e3e3e3"></div><div class="a" style="left:289px;top:656px;width:1px;height:24px;background:#e3e3e3"></div><div class="a" style="left:339px;top:656px;width:1px;height:24px;background:#e3e3e3"></div><div class="a" style="left:439px;top:656px;width:1px;height:24px;background:#e3e3e3"></div><div class="a" style="left:639px;top:656px;width:1px;height:24px;background:#e3e3e3"></div><div class="a" style="left:839px;top:656px;width:1px;height:24px;background:#e3e3e3"></div><div class="a" style="left:939px;top:656px;width:1px;height:24px;background:#e3e3e3"></div><div class="a" style="left:1039px;top:656px;width:1px;height:24px;background:#e3e3e3"></div><svg class="a" style="left:57px;top:660px" width="17" height="17" viewBox="0 0 17 17"><path transform="translate(8.5 8.6) rotate(42) translate(-5 -9.7)" d="M3.6 5 V13.6 A1.45 1.45 0 0 0 6.5 13.6 V3.2 A2.5 2.5 0 0 0 1.5 3.2 V15 A3.5 3.5 0 0 0 8.5 15 V6.2" fill="none" stroke="#777" stroke-width="1.1"/></svg><svg class="a" style="left:103px;top:660px" width="8" height="17" viewBox="0 0 8 17"><circle cx="5.3" cy="2.6" r="2.2" fill="#233a5a"/><path d="M5.4 7.3 L3.3 14.2" stroke="#233a5a" stroke-width="2.9" stroke-linecap="round"/><path d="M2.6 15 Q5 15.3 7.4 12.9" fill="none" stroke="#233a5a" stroke-width="1.9" stroke-linecap="round"/></svg>
<div class="a" style="left:4px;top:680px;width:1128px;height:24px;background:#d0d9e7"></div><div class="a" style="left:5px;top:680px;width:39px;height:24px;background:linear-gradient(#f7f7f7,#e4e2df)"><span style="position:absolute;right:5px;top:5px;font-size:12px;-webkit-text-stroke:0.2px #000">14</span></div><div class="a" style="left:44px;top:680px;width:1px;height:24px;background:#c8d0dc"></div><div class="a" style="left:84px;top:680px;width:1px;height:24px;background:#c8d0dc"></div><div class="a" style="left:129px;top:680px;width:1px;height:24px;background:#c8d0dc"></div><div class="a" style="left:199px;top:680px;width:1px;height:24px;background:#c8d0dc"></div><div class="a" style="left:289px;top:680px;width:1px;height:24px;background:#c8d0dc"></div><div class="a" style="left:339px;top:680px;width:1px;height:24px;background:#c8d0dc"></div><div class="a" style="left:439px;top:680px;width:1px;height:24px;background:#c8d0dc"></div><div class="a" style="left:639px;top:680px;width:1px;height:24px;background:#c8d0dc"></div><div class="a" style="left:839px;top:680px;width:1px;height:24px;background:#c8d0dc"></div><div class="a" style="left:939px;top:680px;width:1px;height:24px;background:#c8d0dc"></div><div class="a" style="left:1039px;top:680px;width:1px;height:24px;background:#c8d0dc"></div><svg class="a" style="left:57px;top:684px" width="17" height="17" viewBox="0 0 17 17"><path transform="translate(8.5 8.6) rotate(42) translate(-5 -9.7)" d="M3.6 5 V13.6 A1.45 1.45 0 0 0 6.5 13.6 V3.2 A2.5 2.5 0 0 0 1.5 3.2 V15 A3.5 3.5 0 0 0 8.5 15 V6.2" fill="none" stroke="#777" stroke-width="1.1"/></svg><svg class="a" style="left:103px;top:684px" width="8" height="17" viewBox="0 0 8 17"><circle cx="5.3" cy="2.6" r="2.2" fill="#233a5a"/><path d="M5.4 7.3 L3.3 14.2" stroke="#233a5a" stroke-width="2.9" stroke-linecap="round"/><path d="M2.6 15 Q5 15.3 7.4 12.9" fill="none" stroke="#233a5a" stroke-width="1.9" stroke-linecap="round"/></svg>
<div class="a" style="left:4px;top:704px;width:1128px;height:24px;background:#ffffff"></div><div class="a" style="left:5px;top:704px;width:39px;height:24px;background:linear-gradient(#f7f7f7,#e4e2df)"><span style="position:absolute;right:5px;top:5px;font-size:12px;-webkit-text-stroke:0.2px #000">15</span></div><div class="a" style="left:44px;top:704px;width:1px;height:24px;background:#e3e3e3"></div><div class="a" style="left:84px;top:704px;width:1px;height:24px;background:#e3e3e3"></div><div class="a" style="left:129px;top:704px;width:1px;height:24px;background:#e3e3e3"></div><div class="a" style="left:199px;top:704px;width:1px;height:24px;background:#e3e3e3"></div><div class="a" style="left:289px;top:704px;width:1px;height:24px;background:#e3e3e3"></div><div class="a" style="left:339px;top:704px;width:1px;height:24px;background:#e3e3e3"></div><div class="a" style="left:439px;top:704px;width:1px;height:24px;background:#e3e3e3"></div><div class="a" style="left:639px;top:704px;width:1px;height:24px;background:#e3e3e3"></div><div class="a" style="left:839px;top:704px;width:1px;height:24px;background:#e3e3e3"></div><div class="a" style="left:939px;top:704px;width:1px;height:24px;background:#e3e3e3"></div><div class="a" style="left:1039px;top:704px;width:1px;height:24px;background:#e3e3e3"></div><svg class="a" style="left:57px;top:708px" width="17" height="17" viewBox="0 0 17 17"><path transform="translate(8.5 8.6) rotate(42) translate(-5 -9.7)" d="M3.6 5 V13.6 A1.45 1.45 0 0 0 6.5 13.6 V3.2 A2.5 2.5 0 0 0 1.5 3.2 V15 A3.5 3.5 0 0 0 8.5 15 V6.2" fill="none" stroke="#777" stroke-width="1.1"/></svg><svg class="a" style="left:103px;top:708px" width="8" height="17" viewBox="0 0 8 17"><circle cx="5.3" cy="2.6" r="2.2" fill="#233a5a"/><path d="M5.4 7.3 L3.3 14.2" stroke="#233a5a" stroke-width="2.9" stroke-linecap="round"/><path d="M2.6 15 Q5 15.3 7.4 12.9" fill="none" stroke="#233a5a" stroke-width="1.9" stroke-linecap="round"/></svg>
<div class="a" style="left:4px;top:728px;width:1128px;height:24px;background:#d0d9e7"></div><div class="a" style="left:5px;top:728px;width:39px;height:24px;background:linear-gradient(#f7f7f7,#e4e2df)"><span style="position:absolute;right:5px;top:5px;font-size:12px;-webkit-text-stroke:0.2px #000">16</span></div><div class="a" style="left:44px;top:728px;width:1px;height:24px;background:#c8d0dc"></div><div class="a" style="left:84px;top:728px;width:1px;height:24px;background:#c8d0dc"></div><div class="a" style="left:129px;top:728px;width:1px;height:24px;background:#c8d0dc"></div><div class="a" style="left:199px;top:728px;width:1px;height:24px;background:#c8d0dc"></div><div class="a" style="left:289px;top:728px;width:1px;height:24px;background:#c8d0dc"></div><div class="a" style="left:339px;top:728px;width:1px;height:24px;background:#c8d0dc"></div><div class="a" style="left:439px;top:728px;width:1px;height:24px;background:#c8d0dc"></div><div class="a" style="left:639px;top:728px;width:1px;height:24px;background:#c8d0dc"></div><div class="a" style="left:839px;top:728px;width:1px;height:24px;background:#c8d0dc"></div><div class="a" style="left:939px;top:728px;width:1px;height:24px;background:#c8d0dc"></div><div class="a" style="left:1039px;top:728px;width:1px;height:24px;background:#c8d0dc"></div><svg class="a" style="left:57px;top:732px" width="17" height="17" viewBox="0 0 17 17"><path transform="translate(8.5 8.6) rotate(42) translate(-5 -9.7)" d="M3.6 5 V13.6 A1.45 1.45 0 0 0 6.5 13.6 V3.2 A2.5 2.5 0 0 0 1.5 3.2 V15 A3.5 3.5 0 0 0 8.5 15 V6.2" fill="none" stroke="#777" stroke-width="1.1"/></svg><svg class="a" style="left:103px;top:732px" width="8" height="17" viewBox="0 0 8 17"><circle cx="5.3" cy="2.6" r="2.2" fill="#233a5a"/><path d="M5.4 7.3 L3.3 14.2" stroke="#233a5a" stroke-width="2.9" stroke-linecap="round"/><path d="M2.6 15 Q5 15.3 7.4 12.9" fill="none" stroke="#233a5a" stroke-width="1.9" stroke-linecap="round"/></svg>
<div class="a" style="left:4px;top:752px;width:1128px;height:24px;background:#ffffff"></div><div class="a" style="left:5px;top:752px;width:39px;height:24px;background:linear-gradient(#f7f7f7,#e4e2df)"><span style="position:absolute;right:5px;top:5px;font-size:12px;-webkit-text-stroke:0.2px #000">17</span></div><div class="a" style="left:44px;top:752px;width:1px;height:24px;background:#e3e3e3"></div><div class="a" style="left:84px;top:752px;width:1px;height:24px;background:#e3e3e3"></div><div class="a" style="left:129px;top:752px;width:1px;height:24px;background:#e3e3e3"></div><div class="a" style="left:199px;top:752px;width:1px;height:24px;background:#e3e3e3"></div><div class="a" style="left:289px;top:752px;width:1px;height:24px;background:#e3e3e3"></div><div class="a" style="left:339px;top:752px;width:1px;height:24px;background:#e3e3e3"></div><div class="a" style="left:439px;top:752px;width:1px;height:24px;background:#e3e3e3"></div><div class="a" style="left:639px;top:752px;width:1px;height:24px;background:#e3e3e3"></div><div class="a" style="left:839px;top:752px;width:1px;height:24px;background:#e3e3e3"></div><div class="a" style="left:939px;top:752px;width:1px;height:24px;background:#e3e3e3"></div><div class="a" style="left:1039px;top:752px;width:1px;height:24px;background:#e3e3e3"></div><svg class="a" style="left:57px;top:756px" width="17" height="17" viewBox="0 0 17 17"><path transform="translate(8.5 8.6) rotate(42) translate(-5 -9.7)" d="M3.6 5 V13.6 A1.45 1.45 0 0 0 6.5 13.6 V3.2 A2.5 2.5 0 0 0 1.5 3.2 V15 A3.5 3.5 0 0 0 8.5 15 V6.2" fill="none" stroke="#777" stroke-width="1.1"/></svg><svg class="a" style="left:103px;top:756px" width="8" height="17" viewBox="0 0 8 17"><circle cx="5.3" cy="2.6" r="2.2" fill="#233a5a"/><path d="M5.4 7.3 L3.3 14.2" stroke="#233a5a" stroke-width="2.9" stroke-linecap="round"/><path d="M2.6 15 Q5 15.3 7.4 12.9" fill="none" stroke="#233a5a" stroke-width="1.9" stroke-linecap="round"/></svg>
<div class="a" style="left:4px;top:776px;width:1128px;height:24px;background:#d0d9e7"></div><div class="a" style="left:5px;top:776px;width:39px;height:24px;background:linear-gradient(#f7f7f7,#e4e2df)"><span style="position:absolute;right:5px;top:5px;font-size:12px;-webkit-text-stroke:0.2px #000">18</span></div><div class="a" style="left:44px;top:776px;width:1px;height:24px;background:#c8d0dc"></div><div class="a" style="left:84px;top:776px;width:1px;height:24px;background:#c8d0dc"></div><div class="a" style="left:129px;top:776px;width:1px;height:24px;background:#c8d0dc"></div><div class="a" style="left:199px;top:776px;width:1px;height:24px;background:#c8d0dc"></div><div class="a" style="left:289px;top:776px;width:1px;height:24px;background:#c8d0dc"></div><div class="a" style="left:339px;top:776px;width:1px;height:24px;background:#c8d0dc"></div><div class="a" style="left:439px;top:776px;width:1px;height:24px;background:#c8d0dc"></div><div class="a" style="left:639px;top:776px;width:1px;height:24px;background:#c8d0dc"></div><div class="a" style="left:839px;top:776px;width:1px;height:24px;background:#c8d0dc"></div><div class="a" style="left:939px;top:776px;width:1px;height:24px;background:#c8d0dc"></div><div class="a" style="left:1039px;top:776px;width:1px;height:24px;background:#c8d0dc"></div><svg class="a" style="left:57px;top:780px" width="17" height="17" viewBox="0 0 17 17"><path transform="translate(8.5 8.6) rotate(42) translate(-5 -9.7)" d="M3.6 5 V13.6 A1.45 1.45 0 0 0 6.5 13.6 V3.2 A2.5 2.5 0 0 0 1.5 3.2 V15 A3.5 3.5 0 0 0 8.5 15 V6.2" fill="none" stroke="#777" stroke-width="1.1"/></svg><svg class="a" style="left:103px;top:780px" width="8" height="17" viewBox="0 0 8 17"><circle cx="5.3" cy="2.6" r="2.2" fill="#233a5a"/><path d="M5.4 7.3 L3.3 14.2" stroke="#233a5a" stroke-width="2.9" stroke-linecap="round"/><path d="M2.6 15 Q5 15.3 7.4 12.9" fill="none" stroke="#233a5a" stroke-width="1.9" stroke-linecap="round"/></svg>
<div class="a" style="left:4px;top:800px;width:1128px;height:24px;background:#ffffff"></div><div class="a" style="left:5px;top:800px;width:39px;height:24px;background:linear-gradient(#f7f7f7,#e4e2df)"><span style="position:absolute;right:5px;top:5px;font-size:12px;-webkit-text-stroke:0.2px #000">19</span></div><div class="a" style="left:44px;top:800px;width:1px;height:24px;background:#e3e3e3"></div><div class="a" style="left:84px;top:800px;width:1px;height:24px;background:#e3e3e3"></div><div class="a" style="left:129px;top:800px;width:1px;height:24px;background:#e3e3e3"></div><div class="a" style="left:199px;top:800px;width:1px;height:24px;background:#e3e3e3"></div><div class="a" style="left:289px;top:800px;width:1px;height:24px;background:#e3e3e3"></div><div class="a" style="left:339px;top:800px;width:1px;height:24px;background:#e3e3e3"></div><div class="a" style="left:439px;top:800px;width:1px;height:24px;background:#e3e3e3"></div><div class="a" style="left:639px;top:800px;width:1px;height:24px;background:#e3e3e3"></div><div class="a" style="left:839px;top:800px;width:1px;height:24px;background:#e3e3e3"></div><div class="a" style="left:939px;top:800px;width:1px;height:24px;background:#e3e3e3"></div><div class="a" style="left:1039px;top:800px;width:1px;height:24px;background:#e3e3e3"></div><svg class="a" style="left:57px;top:804px" width="17" height="17" viewBox="0 0 17 17"><path transform="translate(8.5 8.6) rotate(42) translate(-5 -9.7)" d="M3.6 5 V13.6 A1.45 1.45 0 0 0 6.5 13.6 V3.2 A2.5 2.5 0 0 0 1.5 3.2 V15 A3.5 3.5 0 0 0 8.5 15 V6.2" fill="none" stroke="#777" stroke-width="1.1"/></svg><svg class="a" style="left:103px;top:804px" width="8" height="17" viewBox="0 0 8 17"><circle cx="5.3" cy="2.6" r="2.2" fill="#233a5a"/><path d="M5.4 7.3 L3.3 14.2" stroke="#233a5a" stroke-width="2.9" stroke-linecap="round"/><path d="M2.6 15 Q5 15.3 7.4 12.9" fill="none" stroke="#233a5a" stroke-width="1.9" stroke-linecap="round"/></svg>
<div class="a" style="left:4px;top:824px;width:1128px;height:24px;background:#d0d9e7"></div><div class="a" style="left:5px;top:824px;width:39px;height:24px;background:linear-gradient(#f7f7f7,#e4e2df)"><span style="position:absolute;right:5px;top:5px;font-size:12px;-webkit-text-stroke:0.2px #000">20</span></div><div class="a" style="left:44px;top:824px;width:1px;height:24px;background:#c8d0dc"></div><div class="a" style="left:84px;top:824px;width:1px;height:24px;background:#c8d0dc"></div><div class="a" style="left:129px;top:824px;width:1px;height:24px;background:#c8d0dc"></div><div class="a" style="left:199px;top:824px;width:1px;height:24px;background:#c8d0dc"></div><div class="a" style="left:289px;top:824px;width:1px;height:24px;background:#c8d0dc"></div><div class="a" style="left:339px;top:824px;width:1px;height:24px;background:#c8d0dc"></div><div class="a" style="left:439px;top:824px;width:1px;height:24px;background:#c8d0dc"></div><div class="a" style="left:639px;top:824px;width:1px;height:24px;background:#c8d0dc"></div><div class="a" style="left:839px;top:824px;width:1px;height:24px;background:#c8d0dc"></div><div class="a" style="left:939px;top:824px;width:1px;height:24px;background:#c8d0dc"></div><div class="a" style="left:1039px;top:824px;width:1px;height:24px;background:#c8d0dc"></div><svg class="a" style="left:57px;top:828px" width="17" height="17" viewBox="0 0 17 17"><path transform="translate(8.5 8.6) rotate(42) translate(-5 -9.7)" d="M3.6 5 V13.6 A1.45 1.45 0 0 0 6.5 13.6 V3.2 A2.5 2.5 0 0 0 1.5 3.2 V15 A3.5 3.5 0 0 0 8.5 15 V6.2" fill="none" stroke="#777" stroke-width="1.1"/></svg><svg class="a" style="left:103px;top:828px" width="8" height="17" viewBox="0 0 8 17"><circle cx="5.3" cy="2.6" r="2.2" fill="#233a5a"/><path d="M5.4 7.3 L3.3 14.2" stroke="#233a5a" stroke-width="2.9" stroke-linecap="round"/><path d="M2.6 15 Q5 15.3 7.4 12.9" fill="none" stroke="#233a5a" stroke-width="1.9" stroke-linecap="round"/></svg>
<div class="a" style="left:4px;top:848px;width:1128px;height:24px;background:#ffffff"></div><div class="a" style="left:5px;top:848px;width:39px;height:24px;background:linear-gradient(#f7f7f7,#e4e2df)"><span style="position:absolute;right:5px;top:5px;font-size:12px;-webkit-text-stroke:0.2px #000">21</span></div><div class="a" style="left:44px;top:848px;width:1px;height:24px;background:#e3e3e3"></div><div class="a" style="left:84px;top:848px;width:1px;height:24px;background:#e3e3e3"></div><div class="a" style="left:129px;top:848px;width:1px;height:24px;background:#e3e3e3"></div><div class="a" style="left:199px;top:848px;width:1px;height:24px;background:#e3e3e3"></div><div class="a" style="left:289px;top:848px;width:1px;height:24px;background:#e3e3e3"></div><div class="a" style="left:339px;top:848px;width:1px;height:24px;background:#e3e3e3"></div><div class="a" style="left:439px;top:848px;width:1px;height:24px;background:#e3e3e3"></div><div class="a" style="left:639px;top:848px;width:1px;height:24px;background:#e3e3e3"></div><div class="a" style="left:839px;top:848px;width:1px;height:24px;background:#e3e3e3"></div><div class="a" style="left:939px;top:848px;width:1px;height:24px;background:#e3e3e3"></div><div class="a" style="left:1039px;top:848px;width:1px;height:24px;background:#e3e3e3"></div><svg class="a" style="left:57px;top:852px" width="17" height="17" viewBox="0 0 17 17"><path transform="translate(8.5 8.6) rotate(42) translate(-5 -9.7)" d="M3.6 5 V13.6 A1.45 1.45 0 0 0 6.5 13.6 V3.2 A2.5 2.5 0 0 0 1.5 3.2 V15 A3.5 3.5 0 0 0 8.5 15 V6.2" fill="none" stroke="#777" stroke-width="1.1"/></svg><svg class="a" style="left:103px;top:852px" width="8" height="17" viewBox="0 0 8 17"><circle cx="5.3" cy="2.6" r="2.2" fill="#233a5a"/><path d="M5.4 7.3 L3.3 14.2" stroke="#233a5a" stroke-width="2.9" stroke-linecap="round"/><path d="M2.6 15 Q5 15.3 7.4 12.9" fill="none" stroke="#233a5a" stroke-width="1.9" stroke-linecap="round"/></svg>
<svg class="a" style="left:157px;top:372px" width="18" height="18" viewBox="0 0 18 18"><path d="M5.5 1 H11.5 L15 4.5 V16 H5.5Z" fill="none" stroke="#111" stroke-width="1.4"/><path d="M11.5 1 V4.5 H15" fill="none" stroke="#111" stroke-width="1.1"/><path d="M8.5 7.5 H13 M9 10.2 H13 M9 12.8 H13" stroke="#111" stroke-width="1.3"/><circle cx="4.8" cy="13.2" r="4.6" fill="#38a655"/><path d="M2.4 13.2 L4.2 15 L7.3 11.5" fill="none" stroke="#fff" stroke-width="1.6"/></svg><svg class="a" style="left:207px;top:372px" width="75" height="16" viewBox="0 0 75 16"><rect width="75" height="16" fill="#d9d9d9"/><svg x="1" y="1" width="73" height="13" viewBox="0 0 73 14" preserveAspectRatio="none"><rect width="73" height="14" fill="#0a92ff"/><path d="M7.200000000000001 0 L14.8 7 L7.200000000000001 14" fill="none" stroke="#0a1ee8" stroke-width="3.4"/><path d="M7.200000000000001 0 L14.8 7 L7.200000000000001 14" fill="none" stroke="#dcdcdc" stroke-width="1.6"/><path d="M20.35 0 L27.950000000000003 7 L20.35 14" fill="none" stroke="#0a1ee8" stroke-width="3.4"/><path d="M20.35 0 L27.950000000000003 7 L20.35 14" fill="none" stroke="#dcdcdc" stroke-width="1.6"/><path d="M33.5 0 L41.1 7 L33.5 14" fill="none" stroke="#0a1ee8" stroke-width="3.4"/><path d="M33.5 0 L41.1 7 L33.5 14" fill="none" stroke="#dcdcdc" stroke-width="1.6"/><path d="M46.65 0 L54.25 7 L46.65 14" fill="none" stroke="#0a1ee8" stroke-width="3.4"/><path d="M46.65 0 L54.25 7 L46.65 14" fill="none" stroke="#dcdcdc" stroke-width="1.6"/><path d="M59.800000000000004 0 L67.4 7 L59.800000000000004 14" fill="none" stroke="#0a1ee8" stroke-width="3.4"/><path d="M59.800000000000004 0 L67.4 7 L59.800000000000004 14" fill="none" stroke="#dcdcdc" stroke-width="1.6"/><rect x="0" y="0" width="1" height="14" fill="#0a1ee8"/><rect x="72" y="0" width="1" height="14" fill="#0a1ee8"/></svg></svg><span class="a" style="left:346px;top:373px;font-size:11.2px">Publish</span><span class="a" style="left:845px;top:373px;font-size:11.2px">MD Purity</span><span class="a" style="left:946px;top:373px;font-size:11.2px">2025-02-18</span><span class="a" style="left:1046px;top:373px;font-size:11.2px">2025-02-27</span><svg class="a" style="left:157px;top:396px" width="18" height="18" viewBox="0 0 18 18"><path d="M5.5 1 H11.5 L15 4.5 V16 H5.5Z" fill="none" stroke="#111" stroke-width="1.4"/><path d="M11.5 1 V4.5 H15" fill="none" stroke="#111" stroke-width="1.1"/><path d="M8.5 7.5 H13 M9 10.2 H13 M9 12.8 H13" stroke="#111" stroke-width="1.3"/><circle cx="4.8" cy="13.2" r="4.6" fill="#38a655"/><path d="M2.4 13.2 L4.2 15 L7.3 11.5" fill="none" stroke="#fff" stroke-width="1.6"/></svg><svg class="a" style="left:207px;top:396px" width="75" height="16" viewBox="0 0 75 16"><rect width="75" height="16" fill="#d9d9d9"/><svg x="1" y="1" width="73" height="13" viewBox="0 0 73 14" preserveAspectRatio="none"><rect width="73" height="14" fill="#0a92ff"/><path d="M7.200000000000001 0 L14.8 7 L7.200000000000001 14" fill="none" stroke="#0a1ee8" stroke-width="3.4"/><path d="M7.200000000000001 0 L14.8 7 L7.200000000000001 14" fill="none" stroke="#dcdcdc" stroke-width="1.6"/><path d="M20.35 0 L27.950000000000003 7 L20.35 14" fill="none" stroke="#0a1ee8" stroke-width="3.4"/><path d="M20.35 0 L27.950000000000003 7 L20.35 14" fill="none" stroke="#dcdcdc" stroke-width="1.6"/><path d="M33.5 0 L41.1 7 L33.5 14" fill="none" stroke="#0a1ee8" stroke-width="3.4"/><path d="M33.5 0 L41.1 7 L33.5 14" fill="none" stroke="#dcdcdc" stroke-width="1.6"/><path d="M46.65 0 L54.25 7 L46.65 14" fill="none" stroke="#0a1ee8" stroke-width="3.4"/><path d="M46.65 0 L54.25 7 L46.65 14" fill="none" stroke="#dcdcdc" stroke-width="1.6"/><path d="M59.800000000000004 0 L67.4 7 L59.800000000000004 14" fill="none" stroke="#0a1ee8" stroke-width="3.4"/><path d="M59.800000000000004 0 L67.4 7 L59.800000000000004 14" fill="none" stroke="#dcdcdc" stroke-width="1.6"/><rect x="0" y="0" width="1" height="14" fill="#0a1ee8"/><rect x="72" y="0" width="1" height="14" fill="#0a1ee8"/></svg></svg><span class="a" style="left:346px;top:397px;font-size:11.2px">Publish</span><span class="a" style="left:845px;top:397px;font-size:11.2px">MD Purity</span><span class="a" style="left:946px;top:397px;font-size:11.2px">2025-02-17</span><span class="a" style="left:1046px;top:397px;font-size:11.2px">2025-03-05</span><svg class="a" style="left:306px;top:372px" width="17" height="17" viewBox="0 0 17 17"><defs><radialGradient id="bg7" cx="40%" cy="35%" r="65%"><stop offset="0" stop-color="#4fc3f7"/><stop offset="1" stop-color="#0f8ad0"/></radialGradient></defs><circle cx="8.5" cy="8.5" r="8" fill="url(#bg7)"/><text x="8.5" y="12.8" text-anchor="middle" font-family="Liberation Sans" font-weight="bold" font-size="11" fill="#fff">7</text></svg><svg class="a" style="left:306px;top:395px" width="18" height="18" viewBox="0 0 18 18"><rect x="1" y="3" width="13" height="13" rx="1.5" fill="#fff" stroke="#111" stroke-width="1.3"/><rect x="1" y="3" width="13" height="3.5" fill="#1e6fd0"/><rect x="3" y="1" width="2" height="3" fill="#111"/><rect x="10" y="1" width="2" height="3" fill="#111"/><circle cx="13" cy="13" r="4" fill="#fff" stroke="#1e6fd0" stroke-width="1.3"/><path d="M13 11 V13 H14.5" fill="none" stroke="#1e6fd0" stroke-width="1"/></svg>
<div class="a" style="left:823px;top:35px;width:214px;height:100px;background:#f0f0f0;border-top:1px solid #99bbe8;box-shadow:1px 1px 2px rgba(0,0,0,.08)"></div>
<div class="a" style="left:851px;top:36px;width:1px;height:99px;background:#e0e0e0"></div><div class="a" style="left:852px;top:36px;width:1px;height:99px;background:#fff"></div>
<svg class="a" style="left:828px;top:43px" width="17" height="15" viewBox="0 0 17 15"><path d="M4 12.5 H2.8 Q0.8 12.5 0.8 10 Q0.8 7.8 3 7.6 Q3 3.8 6.8 3.6 Q8.8 1 11.5 2.6 Q14 3.8 13.6 6.8 Q16.2 7.4 16.2 10 Q16 12.5 13.5 12.5 H13" fill="#fff" stroke="#222" stroke-width="1.2"/><path d="M6 14.5 V8.5 M3.8 10.5 L6 8 L8.2 10.5" fill="none" stroke="#1e4fd8" stroke-width="1.8"/><path d="M11 7.5 V13.5 M8.8 11.5 L11 14 L13.2 11.5" fill="none" stroke="#e03030" stroke-width="1.8"/></svg><span class="a" style="left:860px;top:45px;font-size:11.3px;color:#222">Lab Inventory Import / Export</span>
<svg class="a" style="left:828px;top:67px" width="17" height="15" viewBox="0 0 17 15"><path d="M4 12.5 H2.8 Q0.8 12.5 0.8 10 Q0.8 7.8 3 7.6 Q3 3.8 6.8 3.6 Q8.8 1 11.5 2.6 Q14 3.8 13.6 6.8 Q16.2 7.4 16.2 10 Q16 12.5 13.5 12.5 H13" fill="#fff" stroke="#222" stroke-width="1.2"/><path d="M6 14.5 V8.5 M3.8 10.5 L6 8 L8.2 10.5" fill="none" stroke="#1e4fd8" stroke-width="1.8"/><path d="M11 7.5 V13.5 M8.8 11.5 L11 14 L13.2 11.5" fill="none" stroke="#e03030" stroke-width="1.8"/></svg><span class="a" style="left:860px;top:69px;font-size:11.3px;color:#222">Basic Inventory Import / Export</span>
<svg class="a" style="left:828px;top:91px" width="17" height="15" viewBox="0 0 17 15"><path d="M4 12.5 H2.8 Q0.8 12.5 0.8 10 Q0.8 7.8 3 7.6 Q3 3.8 6.8 3.6 Q8.8 1 11.5 2.6 Q14 3.8 13.6 6.8 Q16.2 7.4 16.2 10 Q16 12.5 13.5 12.5 H13" fill="#fff" stroke="#222" stroke-width="1.2"/><path d="M6 14.5 V8.5 M3.8 10.5 L6 8 L8.2 10.5" fill="none" stroke="#1e4fd8" stroke-width="1.8"/><path d="M11 7.5 V13.5 M8.8 11.5 L11 14 L13.2 11.5" fill="none" stroke="#e03030" stroke-width="1.8"/></svg><span class="a" style="left:860px;top:93px;font-size:11.3px;color:#222">Sample Import / Export</span>
<span class="a" style="left:831px;top:114px;font-size:15px;font-family:'Liberation Serif';color:#1a1a50">P</span><div class="a" style="left:831px;top:115px;width:2px;height:2px;background:#1a1a50"></div><div class="a" style="left:833px;top:129px;width:2px;height:2px;background:#1a1a50"></div>
<span class="a" style="left:860px;top:117px;font-size:11.3px;color:#222">Pronto Export</span>
<div class="a" style="left:820px;top:107px;width:181px;height:28px;border:3px solid #e8474c;box-shadow:0 1px 3px rgba(0,0,0,.35)"></div>
<div class="a" style="left:4px;top:367px;width:1128px;height:25px;border-top:1px dotted #99bbe8;border-bottom:1px dotted #99bbe8"></div>
<div class="a" style="left:2px;top:5px;width:2px;height:848px;background:#99bbe8"></div>
<!--EXCEL-->
<div class="a" style="left:117px;top:408px;width:1030px;height:460px;background:#f0f0f0;border:1px solid #5f5f5f;border-radius:8px 0 0 0;box-shadow:-1px 0 10px rgba(0,0,0,.2)"></div>
<svg class="a" style="left:134px;top:425px" width="17" height="16" viewBox="0 0 17 16"><rect x="5" y="0" width="12" height="16" rx="1.5" fill="#185c37"/><rect x="5" y="0" width="12" height="5.3" fill="#21a366"/><rect x="5" y="5.3" width="12" height="5.3" fill="#107c41"/><rect x="0" y="3" width="10" height="10" rx="1.2" fill="#107c41"/><path d="M2.6 5.2 L7.4 10.8 M7.4 5.2 L2.6 10.8" stroke="#fff" stroke-width="1.5"/></svg>
<span class="a ex" style="left:166px;top:426px;font-size:12.5px;color:#a6a6a6;transform:scaleX(0.88);transform-origin:left">AutoSave</span>
<div class="a" style="left:221px;top:422px;width:45px;height:20px;border:1px solid #c6c6c6;border-radius:10px;background:#fafafa"><div style="position:absolute;left:2px;top:2px;width:14px;height:14px;border-radius:50%;background:#c4c4c4"></div><span style="position:absolute;left:22px;top:2px;font-size:12.5px;color:#a6a6a6;transform:scaleX(0.85);transform-origin:left">Off</span></div>
<svg class="a" style="left:279px;top:425px" width="17" height="17" viewBox="0 0 17 17"><path d="M1.5 1.5 H13 L15.5 4 V15.5 H1.5Z" fill="none" stroke="#b4b4b4" stroke-width="1.1"/><rect x="4.5" y="1.5" width="7" height="4.5" fill="none" stroke="#b4b4b4" stroke-width="1.1"/><rect x="4" y="9.5" width="9" height="6" fill="none" stroke="#b4b4b4" stroke-width="1.1"/></svg>
<svg class="a" style="left:307px;top:424px" width="18" height="18" viewBox="0 0 18 18"><path d="M3 2 V8 H9" fill="none" stroke="#b4b4b4" stroke-width="1.2"/><path d="M3.5 7.5 Q7 3 11.5 4.5 Q16 6.5 15 11 Q14 14.5 9 16.5" fill="none" stroke="#b4b4b4" stroke-width="1.2"/></svg>
<svg class="a" style="left:329px;top:431px" width="7" height="5" viewBox="0 0 7 5"><path d="M0.5 0.5 L3.5 3.5 L6.5 0.5" fill="none" stroke="#b4b4b4" stroke-width="1"/></svg>
<svg class="a" style="left:346px;top:424px" width="18" height="18" viewBox="0 0 18 18"><path d="M15 2 V8 H9" fill="none" stroke="#b4b4b4" stroke-width="1.2"/><path d="M14.5 7.5 Q11 3 6.5 4.5 Q2 6.5 3 11 Q4 14.5 9 16.5" fill="none" stroke="#b4b4b4" stroke-width="1.2"/></svg>
<svg class="a" style="left:368px;top:431px" width="7" height="5" viewBox="0 0 7 5"><path d="M0.5 0.5 L3.5 3.5 L6.5 0.5" fill="none" stroke="#b4b4b4" stroke-width="1"/></svg>
<svg class="a" style="left:389px;top:428px" width="9" height="9" viewBox="0 0 9 9"><path d="M0.5 1 H8.5 M1 4 L4.5 7.5 L8 4" fill="none" stroke="#b4b4b4" stroke-width="1"/></svg>
<span class="a ex" style="left:423px;top:426px;font-size:12.5px;color:#a6a6a6;transform:scaleX(0.875);transform-origin:left">ProntoList_Accck_02-21-202508050...</span>
<span class="a ex" style="left:621px;top:426px;font-size:12.5px;color:#a6a6a6;transform:scaleX(0.9);transform-origin:left">• Saved to this PC</span>
<svg class="a" style="left:719px;top:431px" width="10" height="6" viewBox="0 0 10 6"><path d="M0.5 0.5 L5 5 L9.5 0.5" fill="none" stroke="#a6a6a6" stroke-width="1.1"/></svg>
<div class="a" style="left:764px;top:417px;width:345px;height:32px;border:1px solid #d2d2d2;border-bottom-color:#c4c4c4;border-radius:5px;background:#f0f0f0"></div>
<svg class="a" style="left:777px;top:424px" width="16" height="16" viewBox="0 0 16 16"><circle cx="10" cy="6" r="4.8" fill="none" stroke="#a6a6a6" stroke-width="1.1"/><path d="M6.6 9.4 L1.5 14.5" stroke="#a6a6a6" stroke-width="1.1"/></svg>
<span class="a ex" style="left:806px;top:425px;font-size:13.5px;color:#a6a6a6;transform:scaleX(0.9);transform-origin:left">Search</span>
<span class="a ex" style="left:140px;top:465px;font-size:13px;color:#242424;">File</span>
<span class="a ex" style="left:185px;top:465px;font-size:13px;color:#242424;-webkit-text-stroke:0.45px #242424;">Home</span>
<span class="a ex" style="left:242px;top:465px;font-size:13px;color:#242424;">Insert</span>
<span class="a ex" style="left:295px;top:465px;font-size:13px;color:#242424;">Draw</span>
<span class="a ex" style="left:347px;top:465px;font-size:13px;color:#242424;">Page Layout</span>
<span class="a ex" style="left:439px;top:465px;font-size:13px;color:#242424;">Formulas</span>
<span class="a ex" style="left:513px;top:465px;font-size:13px;color:#242424;">Data</span>
<span class="a ex" style="left:561px;top:465px;font-size:13px;color:#242424;">Review</span>
<span class="a ex" style="left:622px;top:465px;font-size:13px;color:#242424;">View</span>
<span class="a ex" style="left:669px;top:465px;font-size:13px;color:#242424;">Automate</span>
<span class="a ex" style="left:748px;top:465px;font-size:13px;color:#242424;">Help</span>
<span class="a ex" style="left:795px;top:465px;font-size:13px;color:#242424;">Acrobat</span>
<span class="a ex" style="left:864px;top:465px;font-size:13px;color:#242424;">Power Pivot</span>
<div class="a" style="left:185px;top:482px;width:37px;height:3px;border-radius:2px;background:#107c41"></div>
<div class="a" style="left:126px;top:487px;width:1020px;height:99px;background:#fff;border-radius:8px 0 0 8px;box-shadow:0 0.5px 1.5px rgba(0,0,0,.18)"></div>
<svg class="a" style="left:147px;top:496px" width="29" height="30" viewBox="0 0 29 30"><rect x="1" y="3" width="18" height="22" fill="#fde9c8" stroke="#e8892b" stroke-width="1.6"/><path d="M6 3 V1.5 H8 Q10 -0.5 12 1.5 H14 V3 V5 H6Z" fill="#fff" stroke="#6b6b6b" stroke-width="1.1"/><rect x="12.5" y="11.5" width="15" height="17" fill="#fff" stroke="#3b3b3b" stroke-width="1.2"/></svg>
<span class="a ex" style="left:146px;top:531px;font-size:12.5px;color:#242424;transform:scaleX(0.87);transform-origin:left;">Paste</span>
<svg class="a" style="left:154px;top:551px" width="8" height="5" viewBox="0 0 8 5"><path d="M0.7 0.7 L4.0 4.2 L7.3 0.7" fill="none" stroke="#424242" stroke-width="1.1"/></svg>
<svg class="a" style="left:188px;top:495px" width="12" height="16" viewBox="0 0 12 16"><path d="M3 0.5 L8 11 M9 0.5 L4 11" stroke="#424242" stroke-width="1"/><circle cx="3" cy="13" r="2.2" fill="none" stroke="#1e7bd4" stroke-width="1.2"/><circle cx="9" cy="13" r="2.2" fill="none" stroke="#1e7bd4" stroke-width="1.2"/></svg>
<svg class="a" style="left:186px;top:521px" width="17" height="17" viewBox="0 0 17 17"><path d="M4 12.5 H1 V1 H8.5" fill="none" stroke="#424242" stroke-width="1.1"/><path d="M5 4 H11.5 L15.5 8 V16 H5Z" fill="#fff" stroke="#424242" stroke-width="1.1"/><path d="M11.5 4 V8 H15.5 M7.5 10.5 H13 M7.5 13 H13" fill="none" stroke="#424242" stroke-width="0.9"/></svg>
<svg class="a" style="left:213px;top:528px" width="8" height="5" viewBox="0 0 8 5"><path d="M0.7 0.7 L4.0 4.2 L7.3 0.7" fill="none" stroke="#424242" stroke-width="1.1"/></svg>
<svg class="a" style="left:186px;top:546px" width="17" height="17" viewBox="0 0 17 17"><path d="M1 10 L6.5 6 L11 10.5 L7 16 Q5 13 1 10Z" fill="#f7b267" stroke="#e0761c" stroke-width="1.2"/><path d="M3 12.5 L8.5 8.5 M5 14.5 L9.5 10" stroke="#e0761c" stroke-width="0.9"/><path d="M8 6.5 L10.5 9 L16 3.5 Q16.3 1.2 14 1 Z" fill="#fff" stroke="#424242" stroke-width="1.1"/></svg>
<span class="a ex" style="left:150px;top:570px;font-size:12px;color:#242424;">Clipboard</span>
<svg class="a" style="left:226px;top:572px" width="9" height="9" viewBox="0 0 9 9"><path d="M0.5 5 V0.5 H5 M2.5 2.5 L8 8 M4 8.5 H8.5 V4" fill="none" stroke="#424242" stroke-width="1"/></svg>
<div class="a" style="left:237px;top:492px;width:1px;height:89px;background:#e0e0e0"></div>
<div class="a" style="left:246px;top:491px;width:100px;height:24px;border:1px solid #c8c8c8;border-bottom-color:#8a8a8a;border-radius:4px"></div>
<span class="a ex" style="left:249px;top:496px;font-size:13px;color:#242424;transform:scaleX(0.925);transform-origin:left;">Aptos Narrow</span>
<svg class="a" style="left:336px;top:501px" width="8" height="5" viewBox="0 0 8 5"><path d="M0.7 0.7 L4.0 4.2 L7.3 0.7" fill="none" stroke="#424242" stroke-width="1.1"/></svg>
<div class="a" style="left:349px;top:491px;width:43px;height:24px;border:1px solid #c8c8c8;border-bottom-color:#8a8a8a;border-radius:4px"></div>
<span class="a ex" style="left:353px;top:496px;font-size:13px;color:#242424;transform:scaleX(0.9);transform-origin:left;">11</span>
<svg class="a" style="left:382px;top:501px" width="8" height="5" viewBox="0 0 8 5"><path d="M0.7 0.7 L4.0 4.2 L7.3 0.7" fill="none" stroke="#424242" stroke-width="1.1"/></svg>
<span class="a ex" style="left:253px;top:520px;font-size:13px;color:#424242;font-weight:bold">B</span>
<span class="a ex" style="left:280px;top:520px;font-size:14px;color:#424242;font-family:Liberation Serif;font-style:italic">I</span>
<span class="a ex" style="left:304px;top:519px;font-size:13px;color:#424242;text-decoration:underline">U</span>
<svg class="a" style="left:325px;top:528px" width="8" height="5" viewBox="0 0 8 5"><path d="M0.7 0.7 L4.0 4.2 L7.3 0.7" fill="none" stroke="#424242" stroke-width="1.1"/></svg>
<div class="a" style="left:339px;top:518px;width:1px;height:23px;background:#d6d6d6"></div>
<span class="a ex" style="left:346px;top:517px;font-size:17px;color:#424242;">A</span>
<svg class="a" style="left:357px;top:521px" width="7" height="5" viewBox="0 0 7 5"><path d="M0.5 4 L3.5 1 L6.5 4" fill="none" stroke="#1e7bd4" stroke-width="1.1"/></svg>
<span class="a ex" style="left:374px;top:521px;font-size:14px;color:#424242;">A</span>
<svg class="a" style="left:383px;top:521px" width="7" height="5" viewBox="0 0 7 5"><path d="M0.5 1 L3.5 4 L6.5 1" fill="none" stroke="#1e7bd4" stroke-width="1.1"/></svg>
<svg class="a" style="left:250px;top:547px" width="16" height="16" viewBox="0 0 16 16"><path d="M0.5 0.5 H15.5 M15.5 0.5 V15 M0.5 0.5 V15 M8 0.5 V15 M0.5 8 H15.5" fill="none" stroke="#555" stroke-width="1" stroke-dasharray="1 1"/><path d="M0 15.5 H16" stroke="#242424" stroke-width="1.2"/></svg>
<svg class="a" style="left:273px;top:555px" width="8" height="5" viewBox="0 0 8 5"><path d="M0.7 0.7 L4.0 4.2 L7.3 0.7" fill="none" stroke="#424242" stroke-width="1.1"/></svg>
<div class="a" style="left:287px;top:543px;width:1px;height:24px;background:#d6d6d6"></div>
<svg class="a" style="left:294px;top:547px" width="17" height="17" viewBox="0 0 17 17"><path d="M3 8 L8 3 L13 8 L8 13Z" fill="#fff" stroke="#424242" stroke-width="1.1"/><path d="M13 5 Q15 7 14 10" fill="none" stroke="#1e7bd4" stroke-width="1.2"/><rect x="0" y="12.5" width="16" height="3.5" fill="#f2e600"/></svg>
<svg class="a" style="left:318px;top:555px" width="8" height="5" viewBox="0 0 8 5"><path d="M0.7 0.7 L4.0 4.2 L7.3 0.7" fill="none" stroke="#424242" stroke-width="1.1"/></svg>
<span class="a ex" style="left:336px;top:544px;font-size:15px;color:#424242;">A</span>
<div class="a" style="left:335px;top:559px;width:16px;height:4px;background:#e81123"></div>
<svg class="a" style="left:358px;top:555px" width="8" height="5" viewBox="0 0 8 5"><path d="M0.7 0.7 L4.0 4.2 L7.3 0.7" fill="none" stroke="#424242" stroke-width="1.1"/></svg>
<span class="a ex" style="left:300px;top:570px;font-size:12px;color:#242424;">Font</span>
<svg class="a" style="left:388px;top:572px" width="9" height="9" viewBox="0 0 9 9"><path d="M0.5 5 V0.5 H5 M2.5 2.5 L8 8 M4 8.5 H8.5 V4" fill="none" stroke="#424242" stroke-width="1"/></svg>
<div class="a" style="left:399px;top:492px;width:1px;height:89px;background:#e0e0e0"></div>
<svg class="a" style="left:413px;top:495px" width="14" height="13" viewBox="0 0 14 13"><path d="M0.0 0.5 H14.0" stroke="#424242" stroke-width="1"/><path d="M2.0 4.5 H12.0" stroke="#424242" stroke-width="1"/><path d="M0.0 8.5 H14.0" stroke="#424242" stroke-width="1"/></svg>
<svg class="a" style="left:439px;top:498px" width="14" height="13" viewBox="0 0 14 13"><path d="M0.0 0.5 H14.0" stroke="#424242" stroke-width="1"/><path d="M2.0 4.5 H12.0" stroke="#424242" stroke-width="1"/><path d="M0.0 8.5 H14.0" stroke="#424242" stroke-width="1"/></svg>
<div class="a" style="left:460px;top:491px;width:24px;height:24px;border:1px solid #a8a8a8;border-radius:4px;background:#e6e6e6"></div>
<svg class="a" style="left:465px;top:502px" width="14" height="13" viewBox="0 0 14 13"><path d="M0.0 0.5 H14.0" stroke="#424242" stroke-width="1"/><path d="M2.0 4.5 H12.0" stroke="#424242" stroke-width="1"/><path d="M0.0 8.5 H14.0" stroke="#424242" stroke-width="1"/></svg>
<span class="a ex" style="left:492px;top:491px;font-size:11px;color:#424242;line-height:10px">ab</span>
<span class="a ex" style="left:492px;top:500px;font-size:11px;color:#424242;line-height:10px">c</span>
<svg class="a" style="left:499px;top:503px" width="9" height="9" viewBox="0 0 9 9"><path d="M7.5 0.5 V4 Q7.5 6.5 5 6.5 H1 M3.5 4 L1 6.5 L3.5 9" fill="none" stroke="#1e7bd4" stroke-width="1.2"/></svg>
<svg class="a" style="left:413px;top:522px" width="14" height="17" viewBox="0 0 14 17"><path d="M0 0.5 H14" stroke="#424242" stroke-width="1"/><path d="M0 4.5 H10" stroke="#424242" stroke-width="1"/><path d="M0 8.5 H14" stroke="#424242" stroke-width="1"/><path d="M0 12.5 H10" stroke="#424242" stroke-width="1"/></svg>
<svg class="a" style="left:439px;top:522px" width="14" height="17" viewBox="0 0 14 17"><path d="M0.0 0.5 H14.0" stroke="#424242" stroke-width="1"/><path d="M2.0 4.5 H12.0" stroke="#424242" stroke-width="1"/><path d="M0.0 8.5 H14.0" stroke="#424242" stroke-width="1"/><path d="M2.0 12.5 H12.0" stroke="#424242" stroke-width="1"/></svg>
<svg class="a" style="left:465px;top:522px" width="14" height="17" viewBox="0 0 14 17"><path d="M0 0.5 H14" stroke="#424242" stroke-width="1"/><path d="M4 4.5 H14" stroke="#424242" stroke-width="1"/><path d="M0 8.5 H14" stroke="#424242" stroke-width="1"/><path d="M4 12.5 H14" stroke="#424242" stroke-width="1"/></svg>
<svg class="a" style="left:490px;top:521px" width="16" height="15" viewBox="0 0 16 15"><rect x="0.5" y="0.5" width="15" height="14" fill="#fff" stroke="#424242"/><rect x="0.5" y="3.5" width="15" height="8" fill="#d7e9fa" stroke="#1e7bd4"/><path d="M3 7.5 H13 M5 5.5 L3 7.5 L5 9.5 M11 5.5 L13 7.5 L11 9.5" fill="none" stroke="#1e7bd4" stroke-width="1"/></svg>
<svg class="a" style="left:517px;top:529px" width="8" height="5" viewBox="0 0 8 5"><path d="M0.7 0.7 L4.0 4.2 L7.3 0.7" fill="none" stroke="#424242" stroke-width="1.1"/></svg>
<svg class="a" style="left:413px;top:548px" width="14" height="14" viewBox="0 0 14 14"><path d="M0 0.5 H14 M8 5.5 H14 M8 8.5 H14 M0 12.5 H14" stroke="#424242"/><path d="M0.8 6.7 H6 M3 4.5 L0.8 6.7 L3 8.9" fill="none" stroke="#1e7bd4" stroke-width="1.1"/></svg>
<svg class="a" style="left:439px;top:548px" width="14" height="14" viewBox="0 0 14 14"><path d="M0 0.5 H14 M8 5.5 H14 M8 8.5 H14 M0 12.5 H14" stroke="#424242"/><path d="M0 6.7 H5.2 M3 4.5 L5.2 6.7 L3 8.9" fill="none" stroke="#1e7bd4" stroke-width="1.1"/></svg>
<div class="a" style="left:460px;top:543px;width:1px;height:24px;background:#d6d6d6"></div>
<span class="a ex" style="left:467px;top:546px;font-size:11px;color:#424242;transform:rotate(-45deg);display:inline-block">ab</span>
<svg class="a" style="left:468px;top:547px" width="16" height="15" viewBox="0 0 16 15"><path d="M3 14 L14 3 M10 3 H14 V7" fill="none" stroke="#1e7bd4" stroke-width="1.2"/></svg>
<svg class="a" style="left:487px;top:555px" width="8" height="5" viewBox="0 0 8 5"><path d="M0.7 0.7 L4.0 4.2 L7.3 0.7" fill="none" stroke="#424242" stroke-width="1.1"/></svg>
<span class="a ex" style="left:436px;top:570px;font-size:12px;color:#242424;">Alignment</span>
<svg class="a" style="left:530px;top:572px" width="9" height="9" viewBox="0 0 9 9"><path d="M0.5 5 V0.5 H5 M2.5 2.5 L8 8 M4 8.5 H8.5 V4" fill="none" stroke="#424242" stroke-width="1"/></svg>
<div class="a" style="left:541px;top:492px;width:1px;height:89px;background:#e0e0e0"></div>
<div class="a" style="left:550px;top:491px;width:91px;height:24px;border:1px solid #c8c8c8;border-bottom-color:#8a8a8a;border-radius:4px"></div>
<span class="a ex" style="left:553px;top:496px;font-size:12.5px;color:#242424;transform:scaleX(0.88);transform-origin:left;">General</span>
<svg class="a" style="left:631px;top:501px" width="7" height="5" viewBox="0 0 7 5"><path d="M0.7 0.7 L3.5 4.2 L6.3 0.7" fill="none" stroke="#424242" stroke-width="1.1"/></svg>
<svg class="a" style="left:557px;top:520px" width="9" height="17" viewBox="0 0 9 17"><path d="M7.6 4 Q6.8 2 4.5 2 Q1.3 2 1.3 4.8 Q1.3 7.2 4.5 8.2 Q7.9 9.2 7.9 12 Q7.9 14.8 4.5 14.8 Q1.9 14.8 1 12.6 M4.5 0 V17" fill="none" stroke="#424242" stroke-width="1.1"/></svg>
<svg class="a" style="left:577px;top:528px" width="7" height="5" viewBox="0 0 7 5"><path d="M0.7 0.7 L3.5 4.2 L6.3 0.7" fill="none" stroke="#424242" stroke-width="1.1"/></svg>
<svg class="a" style="left:595px;top:521px" width="16" height="16" viewBox="0 0 16 16"><circle cx="3.6" cy="4.2" r="2.8" fill="none" stroke="#424242" stroke-width="1.1"/><circle cx="12.2" cy="11.6" r="2.8" fill="none" stroke="#424242" stroke-width="1.1"/><path d="M12.5 1 L3 15.5" stroke="#424242" stroke-width="1.1"/></svg>
<svg class="a" style="left:625px;top:522px" width="9" height="14" viewBox="0 0 9 14"><circle cx="4.6" cy="4.4" r="3.7" fill="#2a2a2a"/><path d="M8.2 5 Q8 10.5 1 13.5" fill="none" stroke="#2a2a2a" stroke-width="1.5"/></svg>
<svg class="a" style="left:554px;top:546px" width="18" height="18" viewBox="0 0 18 18"><text x="8" y="8.6" font-size="9.5" font-family="Liberation Sans" fill="#424242">.0</text><text x="2.6" y="16.6" font-size="9.5" font-family="Liberation Sans" fill="#424242">.00</text><path d="M0.8 5.8 H9 M3.6 3 L0.8 5.8 L3.6 8.6" fill="none" stroke="#1e88d8" stroke-width="1.1"/></svg>
<svg class="a" style="left:580px;top:546px" width="18" height="18" viewBox="0 0 18 18"><text x="2.5" y="8.6" font-size="9.5" font-family="Liberation Sans" fill="#424242">.00</text><text x="8" y="16.6" font-size="9.5" font-family="Liberation Sans" fill="#424242">.0</text><path d="M0 13.2 H8.5 M5.7 10.4 L8.5 13.2 L5.7 16" fill="none" stroke="#1e88d8" stroke-width="1.1"/></svg>
<span class="a ex" style="left:567px;top:570px;font-size:12px;color:#242424;">Number</span>
<svg class="a" style="left:637px;top:572px" width="9" height="9" viewBox="0 0 9 9"><path d="M0.5 5 V0.5 H5 M2.5 2.5 L8 8 M4 8.5 H8.5 V4" fill="none" stroke="#424242" stroke-width="1"/></svg>
<div class="a" style="left:648px;top:492px;width:1px;height:89px;background:#e0e0e0"></div>
<svg class="a" style="left:661px;top:496px" width="17" height="15" viewBox="0 0 17 15"><rect x="0.5" y="0.5" width="15" height="13" fill="#fff" stroke="#3a3a3a"/><path d="M3.5 0.5 V13.5 M12.5 0.5 V13.5 M0.5 4.5 H15.5 M0.5 9 H15.5" stroke="#3a3a3a" stroke-width="0.9"/><rect x="3.5" y="0.5" width="5.5" height="3.5" fill="#f7a3ab" stroke="#e0202c"/><rect x="3.5" y="9" width="7.5" height="4.5" fill="#f7a3ab" stroke="#e0202c"/><rect x="3.5" y="4.5" width="2.5" height="4.5" fill="#9fd0f5" stroke="#1e7bd4" stroke-width="0.9"/></svg>
<span class="a ex" style="left:681px;top:497px;font-size:12.2px;color:#242424;">Conditional Formatting</span>
<svg class="a" style="left:806px;top:502px" width="7" height="5" viewBox="0 0 7 5"><path d="M0.7 0.7 L3.5 4.2 L6.3 0.7" fill="none" stroke="#424242" stroke-width="1.1"/></svg>
<svg class="a" style="left:661px;top:522px" width="17" height="16" viewBox="0 0 17 16"><path d="M0.5 13.5 V0.5 H15.5 V3" fill="none" stroke="#3a3a3a"/><path d="M0.5 4 H15.5 M0.5 8.5 H5 M5.5 0.5 V13.5 M10.5 0.5 V4" stroke="#3a3a3a" stroke-width="0.9"/><rect x="5.5" y="4.5" width="10" height="9.5" fill="#8cc4f0" stroke="#1e7bd4" stroke-dasharray="2 1"/><path d="M15.5 2.5 L8.5 10" stroke="#3a3a3a" stroke-width="2.6" stroke-linecap="round"/><path d="M15.5 2.5 L8.5 10" stroke="#fff" stroke-width="1.2" stroke-linecap="round"/><path d="M4 15 Q4.5 11 8 10.5 L9.2 11.8 Q8.5 15 4 15Z" fill="#1e7bd4"/></svg>
<span class="a ex" style="left:681px;top:523px;font-size:12.2px;color:#242424;transform:scaleX(0.95);transform-origin:left;">Format as Table</span>
<svg class="a" style="left:766px;top:528px" width="7" height="5" viewBox="0 0 7 5"><path d="M0.7 0.7 L3.5 4.2 L6.3 0.7" fill="none" stroke="#424242" stroke-width="1.1"/></svg>
<svg class="a" style="left:661px;top:548px" width="17" height="16" viewBox="0 0 17 16"><rect x="0.5" y="0.5" width="15" height="13" fill="#fff" stroke="#3a3a3a"/><path d="M0.5 4 H15.5 M0.5 9 H15.5 M3 0.5 V13.5 M13 0.5 V13.5" stroke="#3a3a3a" stroke-width="0.9"/><rect x="3" y="2.5" width="10.5" height="9.5" fill="#8cc4f0" stroke="#1e7bd4"/><path d="M15.5 2.5 L8.5 10" stroke="#3a3a3a" stroke-width="2.6" stroke-linecap="round"/><path d="M15.5 2.5 L8.5 10" stroke="#fff" stroke-width="1.2" stroke-linecap="round"/><path d="M3.5 15 Q4 11 7.8 10.5 L9 11.8 Q8.3 15 3.5 15Z" fill="#1e7bd4"/></svg>
<span class="a ex" style="left:681px;top:549px;font-size:12.2px;color:#242424;transform:scaleX(0.95);transform-origin:left;">Cell Styles</span>
<svg class="a" style="left:736px;top:554px" width="7" height="5" viewBox="0 0 7 5"><path d="M0.7 0.7 L3.5 4.2 L6.3 0.7" fill="none" stroke="#424242" stroke-width="1.1"/></svg>
<span class="a ex" style="left:726px;top:570px;font-size:12px;color:#242424;">Styles</span>
<div class="a" style="left:832px;top:492px;width:1px;height:89px;background:#e0e0e0"></div>
<svg class="a" style="left:845px;top:496px" width="17" height="15" viewBox="0 0 17 15"><path d="M0.5 0.5 H15.5 V13.5 H0.5Z M0.5 4.5 H15.5 M0.5 9 H15.5 M5.5 0.5 V13.5 M10.5 0.5 V13.5" fill="#fff" stroke="#3a3a3a" stroke-width="0.9"/><rect x="6" y="4.5" width="9.5" height="4.5" fill="#9fd0f5" stroke="#1e7bd4" stroke-width="1.1"/><path d="M0.8 6.7 H7 M3.5 4 L0.8 6.7 L3.5 9.4" fill="none" stroke="#1e88d8" stroke-width="1.1"/></svg>
<span class="a ex" style="left:865px;top:497px;font-size:12.2px;color:#242424;">Insert</span>
<svg class="a" style="left:910px;top:502px" width="7" height="5" viewBox="0 0 7 5"><path d="M0.7 0.7 L3.5 4.2 L6.3 0.7" fill="none" stroke="#424242" stroke-width="1.1"/></svg>
<svg class="a" style="left:845px;top:522px" width="17" height="15" viewBox="0 0 17 15"><path d="M0.5 0.5 H15.5 M0.5 13.5 H15.5 M0.5 0.5 V4 M0.5 9.5 V13.5 M15.5 0.5 V4 M15.5 9.5 V13.5 M0.5 4.5 H3 M0.5 9 H3 M5.5 0.5 V4 M10.5 0.5 V4 M5.5 9.5 V13.5 M10.5 9.5 V13.5 M12 4.5 H15.5 M12 9 H15.5" fill="none" stroke="#3a3a3a" stroke-width="0.9"/><rect x="3" y="4.5" width="5.5" height="4.5" fill="#9fd0f5" stroke="#1e7bd4" stroke-width="1.1"/><path d="M10 4 L15 9.5 M15 4 L10 9.5" stroke="#e81123" stroke-width="1"/></svg>
<span class="a ex" style="left:865px;top:523px;font-size:12.2px;color:#242424;">Delete</span>
<svg class="a" style="left:914px;top:528px" width="7" height="5" viewBox="0 0 7 5"><path d="M0.7 0.7 L3.5 4.2 L6.3 0.7" fill="none" stroke="#424242" stroke-width="1.1"/></svg>
<svg class="a" style="left:845px;top:547px" width="17" height="17" viewBox="0 0 17 17"><path d="M0.5 4 V16.5 H15.5 V4 M0.5 8.5 H15.5 M0.5 12.5 H15.5 M4 4 V16.5 M12 4 V16.5" fill="none" stroke="#3a3a3a" stroke-width="0.9"/><rect x="4" y="6.5" width="8" height="5.5" fill="#9fd0f5" stroke="#1e7bd4" stroke-width="1.1"/><path d="M3 1.5 H13 M3 0 V3 M13 0 V3" stroke="#1e88d8" stroke-width="1"/></svg>
<span class="a ex" style="left:865px;top:549px;font-size:12.2px;color:#242424;">Format</span>
<svg class="a" style="left:906px;top:554px" width="7" height="5" viewBox="0 0 7 5"><path d="M0.7 0.7 L3.5 4.2 L6.3 0.7" fill="none" stroke="#424242" stroke-width="1.1"/></svg>
<span class="a ex" style="left:875px;top:570px;font-size:12px;color:#242424;">Cells</span>
<div class="a" style="left:939px;top:492px;width:1px;height:89px;background:#e0e0e0"></div>
<svg class="a" style="left:950px;top:493px" width="30" height="30" viewBox="0 0 30 30"><circle cx="19" cy="11" r="9.5" fill="#fff" stroke="#424242" stroke-width="1.2"/><path d="M12.5 18 L1.5 29" stroke="#424242" stroke-width="1.2"/></svg>
<span class="a ex" style="left:947px;top:528px;font-size:12.5px;color:#242424;transform:scaleX(0.96);transform-origin:left;">Editing</span>
<svg class="a" style="left:962px;top:548px" width="7" height="5" viewBox="0 0 7 5"><path d="M0.7 0.7 L3.5 4.2 L6.3 0.7" fill="none" stroke="#424242" stroke-width="1.1"/></svg>
<div class="a" style="left:993px;top:492px;width:1px;height:89px;background:#e0e0e0"></div>
<svg class="a" style="left:1019px;top:493px" width="28" height="31" viewBox="0 0 28 31"><rect x="0.5" y="3.5" width="20" height="26" fill="#efefef" stroke="#c8c8c8"/><path d="M6 18 L13 11 L16 14 L9 21Z" fill="none" stroke="#b8b8b8" stroke-width="1.2"/><path d="M13 8 L19 2 L26 9 L20 15" fill="#fff" stroke="#b8b8b8" stroke-width="1.2"/></svg>
<span class="a ex" style="left:1004px;top:530px;font-size:12.2px;color:#b0b0b0;transform:scaleX(0.96);transform-origin:left;">Sensitivity</span>
<svg class="a" style="left:1026px;top:551px" width="7" height="5" viewBox="0 0 7 5"><path d="M0.7 0.7 L3.5 4.2 L6.3 0.7" fill="none" stroke="#c0c0c0" stroke-width="1.1"/></svg>
<span class="a ex" style="left:1005px;top:570px;font-size:12px;color:#242424;">Sensitivity</span>
<div class="a" style="left:1067px;top:492px;width:1px;height:89px;background:#e0e0e0"></div>
<svg class="a" style="left:1084px;top:495px" width="29" height="29" viewBox="0 0 29 29"><rect x="1" y="1" width="27" height="27" fill="none" stroke="#d4461b" stroke-width="1.4"/><rect x="4.5" y="4.5" width="8.5" height="8.5" fill="none" stroke="#d4461b" stroke-width="1.4"/><rect x="16" y="4.5" width="8.5" height="8.5" fill="none" stroke="#d4461b" stroke-width="1.4"/><rect x="4.5" y="16" width="8.5" height="8.5" fill="none" stroke="#d4461b" stroke-width="1.4"/><rect x="16" y="16" width="8.5" height="8.5" fill="none" stroke="#d4461b" stroke-width="1.4"/></svg>
<span class="a ex" style="left:1078px;top:530px;font-size:12.5px;color:#242424;">Add-ins</span>
<span class="a ex" style="left:1079px;top:570px;font-size:12px;color:#242424;">Add-ins</span>
<div class="a" style="left:126px;top:588px;width:1020px;height:29px;background:#fbf6da;border-radius:6px 0 0 6px;box-shadow:0 1px 2px rgba(0,0,0,.18)"></div>
<svg class="a" style="left:138px;top:595px" width="16" height="16" viewBox="0 0 16 16"><circle cx="8" cy="8" r="7.2" fill="none" stroke="#1f6fc5" stroke-width="1.3"/><rect x="7.3" y="6.5" width="1.4" height="5.5" fill="#1f6fc5"/><circle cx="8" cy="4.4" r="0.9" fill="#1f6fc5"/></svg>
<span class="a ex" style="left:162px;top:596px;font-size:12px;color:#242424;transform:scaleX(0.917);transform-origin:left">POSSIBLE DATA LOSS</span>
<span class="a ex" style="left:290px;top:596px;font-size:12px;color:#242424;text-decoration:underline;transform:scaleX(0.99);transform-origin:left">Some features might be lost if you save this workbook in the comma-delimited (.csv) format. To preserve these features, save it in an Excel file format.</span>
<div class="a" style="left:1089px;top:589px;width:60px;height:26px;background:#fff;border:1px solid #c8c8c8;border-radius:4px"><span style="position:absolute;left:8px;top:5px;font-size:12.5px;color:#242424">Don't save</span></div>
<div class="a" style="left:118px;top:625px;width:1020px;height:1px;background:#e1e1e1"></div>
<div class="a" style="left:118px;top:626px;width:1020px;height:34px;background:#fafafa"></div>
<div class="a" style="left:127px;top:626px;width:101px;height:25px;background:#fff;border:1px solid #d6d6d6;border-radius:5px"></div>
<span class="a ex" style="left:132px;top:630px;font-size:13.5px;color:#242424;transform:scaleX(0.85);transform-origin:left">A1</span>
<svg class="a" style="left:211px;top:636px" width="11" height="7" viewBox="0 0 11 7"><path d="M0.7 0.7 L5.5 5.7 L10.3 0.7" fill="none" stroke="#242424" stroke-width="1.2"/></svg>
<svg class="a" style="left:236px;top:632px" width="4" height="14" viewBox="0 0 4 14"><circle cx="2" cy="2" r="1.2" fill="#242424"/><circle cx="2" cy="7" r="1.2" fill="#242424"/><circle cx="2" cy="12" r="1.2" fill="#242424"/></svg>
<div class="a" style="left:248px;top:626px;width:86px;height:25px;background:#fff;border:1px solid #d6d6d6;border-radius:5px"></div>
<svg class="a" style="left:255px;top:632px" width="13" height="13" viewBox="0 0 13 13"><path d="M1 1 L12 12 M12 1 L1 12" stroke="#b0b0b0" stroke-width="1.1"/></svg>
<svg class="a" style="left:276px;top:632px" width="18" height="13" viewBox="0 0 18 13"><path d="M1 6.5 L6 11.5 L17 1" fill="none" stroke="#b0b0b0" stroke-width="1.1"/></svg>
<span class="a ex" style="left:301px;top:627px;font-size:17px;color:#242424;font-family:Liberation Serif;font-style:italic;letter-spacing:-1px">fx</span>
<svg class="a" style="left:321px;top:636px" width="10" height="6" viewBox="0 0 10 6"><path d="M0.6 0.6 L5 5 L9.4 0.6" fill="none" stroke="#8a8a8a" stroke-width="1"/></svg>
<div class="a" style="left:339px;top:626px;width:810px;height:25px;background:#fff;border:1px solid #d6d6d6;border-radius:5px"></div>
<span class="a ex" style="left:349px;top:630px;font-size:13.5px;color:#242424;transform:scaleX(1.03);transform-origin:left">TestNumber</span>
<div class="a" style="left:118px;top:660px;width:1020px;height:18px;background:#f0f0f0;border-bottom:1px solid #bdbdbd"></div>
<svg class="a" style="left:128px;top:663px" width="12" height="11" viewBox="0 0 12 11"><path d="M12 0 V11 H0Z" fill="#d9d9d9"/></svg>
<div class="a" style="left:143px;top:660px;width:1px;height:18px;background:#d6d6d6"></div>
<span class="a ex" style="left:143px;top:661px;width:64px;text-align:center;font-size:13px;color:#424242">A</span>
<div class="a" style="left:207px;top:660px;width:1px;height:18px;background:#d6d6d6"></div>
<span class="a ex" style="left:207px;top:661px;width:64px;text-align:center;font-size:13px;color:#424242">B</span>
<div class="a" style="left:271px;top:660px;width:1px;height:18px;background:#d6d6d6"></div>
<span class="a ex" style="left:271px;top:661px;width:64px;text-align:center;font-size:13px;color:#424242">C</span>
<div class="a" style="left:335px;top:660px;width:1px;height:18px;background:#d6d6d6"></div>
<span class="a ex" style="left:335px;top:661px;width:64px;text-align:center;font-size:13px;color:#424242">D</span>
<div class="a" style="left:399px;top:660px;width:1px;height:18px;background:#d6d6d6"></div>
<span class="a ex" style="left:399px;top:661px;width:64px;text-align:center;font-size:13px;color:#424242">E</span>
<div class="a" style="left:463px;top:660px;width:1px;height:18px;background:#d6d6d6"></div>
<span class="a ex" style="left:463px;top:661px;width:64px;text-align:center;font-size:13px;color:#424242">F</span>
<div class="a" style="left:527px;top:660px;width:1px;height:18px;background:#d6d6d6"></div>
<span class="a ex" style="left:527px;top:661px;width:64px;text-align:center;font-size:13px;color:#424242">G</span>
<div class="a" style="left:591px;top:660px;width:1px;height:18px;background:#d6d6d6"></div>
<span class="a ex" style="left:591px;top:661px;width:64px;text-align:center;font-size:13px;color:#424242">H</span>
<div class="a" style="left:655px;top:660px;width:1px;height:18px;background:#d6d6d6"></div>
<span class="a ex" style="left:655px;top:661px;width:64px;text-align:center;font-size:13px;color:#424242">I</span>
<div class="a" style="left:719px;top:660px;width:1px;height:18px;background:#d6d6d6"></div>
<span class="a ex" style="left:719px;top:661px;width:64px;text-align:center;font-size:13px;color:#424242">J</span>
<div class="a" style="left:783px;top:660px;width:1px;height:18px;background:#d6d6d6"></div>
<span class="a ex" style="left:783px;top:661px;width:64px;text-align:center;font-size:13px;color:#424242">K</span>
<div class="a" style="left:847px;top:660px;width:1px;height:18px;background:#d6d6d6"></div>
<span class="a ex" style="left:847px;top:661px;width:64px;text-align:center;font-size:13px;color:#424242">L</span>
<div class="a" style="left:911px;top:660px;width:1px;height:18px;background:#d6d6d6"></div>
<span class="a ex" style="left:911px;top:661px;width:64px;text-align:center;font-size:13px;color:#424242">M</span>
<div class="a" style="left:975px;top:660px;width:1px;height:18px;background:#d6d6d6"></div>
<span class="a ex" style="left:975px;top:661px;width:64px;text-align:center;font-size:13px;color:#424242">N</span>
<div class="a" style="left:1039px;top:660px;width:1px;height:18px;background:#d6d6d6"></div>
<span class="a ex" style="left:1039px;top:661px;width:64px;text-align:center;font-size:13px;color:#424242">O</span>
<div class="a" style="left:1103px;top:660px;width:1px;height:18px;background:#d6d6d6"></div>
<span class="a ex" style="left:1103px;top:661px;width:64px;text-align:center;font-size:13px;color:#424242">P</span>
<div class="a" style="left:118px;top:678px;width:1020px;height:180px;background:#fff"></div>
<div class="a" style="left:143px;top:697px;width:1000px;height:1px;background:#e1e1e1"></div>
<div class="a" style="left:118px;top:697px;width:25px;height:1px;background:#ececec"></div>
<span class="a ex" style="left:118px;top:680px;width:24px;text-align:center;font-size:13px;color:#424242">1</span>
<div class="a" style="left:143px;top:717px;width:1000px;height:1px;background:#e1e1e1"></div>
<div class="a" style="left:118px;top:717px;width:25px;height:1px;background:#ececec"></div>
<span class="a ex" style="left:118px;top:700px;width:24px;text-align:center;font-size:13px;color:#424242">2</span>
<div class="a" style="left:143px;top:737px;width:1000px;height:1px;background:#e1e1e1"></div>
<div class="a" style="left:118px;top:737px;width:25px;height:1px;background:#ececec"></div>
<span class="a ex" style="left:118px;top:720px;width:24px;text-align:center;font-size:13px;color:#424242">3</span>
<div class="a" style="left:143px;top:757px;width:1000px;height:1px;background:#e1e1e1"></div>
<div class="a" style="left:118px;top:757px;width:25px;height:1px;background:#ececec"></div>
<span class="a ex" style="left:118px;top:740px;width:24px;text-align:center;font-size:13px;color:#424242">4</span>
<div class="a" style="left:143px;top:777px;width:1000px;height:1px;background:#e1e1e1"></div>
<div class="a" style="left:118px;top:777px;width:25px;height:1px;background:#ececec"></div>
<span class="a ex" style="left:118px;top:760px;width:24px;text-align:center;font-size:13px;color:#424242">5</span>
<div class="a" style="left:143px;top:797px;width:1000px;height:1px;background:#e1e1e1"></div>
<div class="a" style="left:118px;top:797px;width:25px;height:1px;background:#ececec"></div>
<span class="a ex" style="left:118px;top:780px;width:24px;text-align:center;font-size:13px;color:#424242">6</span>
<div class="a" style="left:143px;top:817px;width:1000px;height:1px;background:#e1e1e1"></div>
<div class="a" style="left:118px;top:817px;width:25px;height:1px;background:#ececec"></div>
<span class="a ex" style="left:118px;top:800px;width:24px;text-align:center;font-size:13px;color:#424242">7</span>
<div class="a" style="left:143px;top:837px;width:1000px;height:1px;background:#e1e1e1"></div>
<div class="a" style="left:118px;top:837px;width:25px;height:1px;background:#ececec"></div>
<span class="a ex" style="left:118px;top:820px;width:24px;text-align:center;font-size:13px;color:#424242">8</span>
<div class="a" style="left:143px;top:857px;width:1000px;height:1px;background:#e1e1e1"></div>
<div class="a" style="left:118px;top:857px;width:25px;height:1px;background:#ececec"></div>
<span class="a ex" style="left:118px;top:840px;width:24px;text-align:center;font-size:13px;color:#424242">9</span>
<div class="a" style="left:143px;top:678px;width:1px;height:180px;background:#e1e1e1"></div>
<div class="a" style="left:207px;top:678px;width:1px;height:180px;background:#e1e1e1"></div>
<div class="a" style="left:271px;top:678px;width:1px;height:180px;background:#e1e1e1"></div>
<div class="a" style="left:335px;top:678px;width:1px;height:180px;background:#e1e1e1"></div>
<div class="a" style="left:399px;top:678px;width:1px;height:180px;background:#e1e1e1"></div>
<div class="a" style="left:463px;top:678px;width:1px;height:180px;background:#e1e1e1"></div>
<div class="a" style="left:527px;top:678px;width:1px;height:180px;background:#e1e1e1"></div>
<div class="a" style="left:591px;top:678px;width:1px;height:180px;background:#e1e1e1"></div>
<div class="a" style="left:655px;top:678px;width:1px;height:180px;background:#e1e1e1"></div>
<div class="a" style="left:719px;top:678px;width:1px;height:180px;background:#e1e1e1"></div>
<div class="a" style="left:783px;top:678px;width:1px;height:180px;background:#e1e1e1"></div>
<div class="a" style="left:847px;top:678px;width:1px;height:180px;background:#e1e1e1"></div>
<div class="a" style="left:911px;top:678px;width:1px;height:180px;background:#e1e1e1"></div>
<div class="a" style="left:975px;top:678px;width:1px;height:180px;background:#e1e1e1"></div>
<div class="a" style="left:1039px;top:678px;width:1px;height:180px;background:#e1e1e1"></div>
<div class="a" style="left:1103px;top:678px;width:1px;height:180px;background:#e1e1e1"></div>
<div class="a" style="left:144px;top:678px;width:63px;height:19px;overflow:hidden;background:transparent"><span class="cell" style="position:absolute;left:2px;top:2px;transform:scaleX(1.0)">TestNumber</span></div>
<div class="a" style="left:208px;top:678px;width:63px;height:19px;overflow:hidden;background:transparent"><span class="cell" style="position:absolute;left:2px;top:2px;transform:scaleX(1.0)">EecCompliance</span></div>
<div class="a" style="left:272px;top:678px;width:63px;height:19px;overflow:hidden;background:transparent"><span class="cell" style="position:absolute;left:2px;top:2px;transform:scaleX(1.0)">GovtCertified</span></div>
<div class="a" style="left:336px;top:678px;width:63px;height:19px;overflow:hidden;background:transparent"><span class="cell" style="position:absolute;left:2px;top:2px;transform:scaleX(1.0)">SeedName</span></div>
<div class="a" style="left:400px;top:678px;width:63px;height:19px;overflow:hidden;background:transparent"><span class="cell" style="position:absolute;left:2px;top:2px;transform:scaleX(1.0)">CommonName</span></div>
<div class="a" style="left:464px;top:678px;width:63px;height:19px;overflow:hidden;background:transparent"><span class="cell" style="position:absolute;left:2px;top:2px;transform:scaleX(1.0)">CultivarName</span></div>
<div class="a" style="left:528px;top:678px;width:63px;height:19px;overflow:hidden;background:transparent"><span class="cell" style="position:absolute;left:2px;top:2px;transform:scaleX(1.0)">Reference</span></div>
<div class="a" style="left:592px;top:678px;width:63px;height:19px;overflow:hidden;background:transparent"><span class="cell" style="position:absolute;left:2px;top:2px;transform:scaleX(1.0)">RegionOfFarm</span></div>
<div class="a" style="left:656px;top:678px;width:63px;height:19px;overflow:hidden;background:transparent"><span class="cell" style="position:absolute;left:2px;top:2px;transform:scaleX(1.0)">MerchantsCode</span></div>
<div class="a" style="left:720px;top:678px;width:63px;height:19px;overflow:hidden;background:transparent"><span class="cell" style="position:absolute;left:2px;top:2px;transform:scaleX(1.0)">DressingCompany</span></div>
<div class="a" style="left:784px;top:678px;width:63px;height:19px;overflow:hidden;background:transparent"><span class="cell" style="position:absolute;left:2px;top:2px;transform:scaleX(1.0)">SeedClass</span></div>
<div class="a" style="left:848px;top:678px;width:63px;height:19px;overflow:hidden;background:transparent"><span class="cell" style="position:absolute;left:2px;top:2px;transform:scaleX(1.0)">NoOfContainers</span></div>
<div class="a" style="left:911px;top:678px;width:63px;height:19px;overflow:hidden"><span class="cell" style="position:absolute;right:1px;top:2px;transform:scaleX(1.0);transform-origin:right center">WeightKg</span></div>
<div class="a" style="left:976px;top:678px;width:63px;height:19px;overflow:hidden;background:transparent"><span class="cell" style="position:absolute;left:2px;top:2px;transform:scaleX(1.0)">DateSampled</span></div>
<div class="a" style="left:1040px;top:678px;width:63px;height:19px;overflow:hidden;background:transparent"><span class="cell" style="position:absolute;left:2px;top:2px;transform:scaleX(1.0)">DateReceived</span></div>
<div class="a" style="left:1104px;top:678px;width:63px;height:19px;overflow:hidden;background:transparent"><span class="cell" style="position:absolute;left:2px;top:2px;transform:scaleX(1.0)">DateTested</span></div>
<div class="a" style="left:144px;top:698px;width:127px;height:19px;overflow:hidden;background:#fff"><span class="cell" style="position:absolute;left:2px;top:2px;transform:scaleX(0.944)">SM100636.4</span></div>
<div class="a" style="left:272px;top:698px;width:63px;height:19px;overflow:hidden;background:transparent"><span class="cell" style="position:absolute;left:2px;top:2px;transform:scaleX(0.877)">CERTIFIED</span></div>
<div class="a" style="left:336px;top:698px;width:127px;height:19px;overflow:hidden;background:#fff"><span class="cell" style="position:absolute;left:2px;top:2px;transform:scaleX(0.97)">Tyson NEA3 (LP447)</span></div>
<div class="a" style="left:464px;top:698px;width:63px;height:19px;overflow:hidden;background:transparent"><span class="cell" style="position:absolute;left:2px;top:2px;transform:scaleX(1.05)">Nucleus</span></div>
<div class="a" style="left:656px;top:698px;width:127px;height:19px;overflow:hidden;background:#fff"><span class="cell" style="position:absolute;left:2px;top:2px;transform:scaleX(1.04)">NZAFound</span></div>
<div class="a" style="left:911px;top:698px;width:63px;height:19px;overflow:hidden"><span class="cell" style="position:absolute;right:1px;top:2px;transform:scaleX(0.93);transform-origin:right center">570</span></div>
<div class="a" style="left:976px;top:698px;width:63px;height:19px;overflow:hidden;background:transparent"><span class="cell" style="position:absolute;left:2px;top:2px;transform:scaleX(0.97)">########</span></div>
<div class="a" style="left:1040px;top:698px;width:63px;height:19px;overflow:hidden;background:transparent"><span class="cell" style="position:absolute;left:2px;top:2px;transform:scaleX(0.97)">########</span></div>
<div class="a" style="left:1104px;top:698px;width:63px;height:19px;overflow:hidden;background:transparent"><span class="cell" style="position:absolute;left:2px;top:2px;transform:scaleX(0.97)">####</span></div>
<div class="a" style="left:144px;top:738px;width:127px;height:19px;overflow:hidden;background:#fff"><span class="cell" style="position:absolute;left:2px;top:2px;transform:scaleX(0.944)">SM100681.4</span></div>
<div class="a" style="left:272px;top:738px;width:63px;height:19px;overflow:hidden;background:transparent"><span class="cell" style="position:absolute;left:2px;top:2px;transform:scaleX(0.877)">CERTIFIED</span></div>
<div class="a" style="left:336px;top:738px;width:127px;height:19px;overflow:hidden;background:#fff"><span class="cell" style="position:absolute;left:2px;top:2px;transform:scaleX(0.97)">LP592 NEA12 (Maxsyn)</span></div>
<div class="a" style="left:464px;top:738px;width:63px;height:19px;overflow:hidden;background:transparent"><span class="cell" style="position:absolute;left:2px;top:2px;transform:scaleX(1.05)">Nucleus</span></div>
<div class="a" style="left:656px;top:738px;width:127px;height:19px;overflow:hidden;background:#fff"><span class="cell" style="position:absolute;left:2px;top:2px;transform:scaleX(1.04)">NZA Found</span></div>
<div class="a" style="left:911px;top:738px;width:63px;height:19px;overflow:hidden"><span class="cell" style="position:absolute;right:1px;top:2px;transform:scaleX(0.93);transform-origin:right center">194</span></div>
<div class="a" style="left:976px;top:738px;width:63px;height:19px;overflow:hidden;background:transparent"><span class="cell" style="position:absolute;left:2px;top:2px;transform:scaleX(0.97)">########</span></div>
<div class="a" style="left:1040px;top:738px;width:63px;height:19px;overflow:hidden;background:transparent"><span class="cell" style="position:absolute;left:2px;top:2px;transform:scaleX(0.97)">########</span></div>
<div class="a" style="left:144px;top:758px;width:127px;height:19px;overflow:hidden;background:#fff"><span class="cell" style="position:absolute;left:2px;top:2px;transform:scaleX(0.944)">SM100685.4</span></div>
<div class="a" style="left:272px;top:758px;width:63px;height:19px;overflow:hidden;background:transparent"><span class="cell" style="position:absolute;left:2px;top:2px;transform:scaleX(0.877)">CERTIFIED</span></div>
<div class="a" style="left:336px;top:758px;width:127px;height:19px;overflow:hidden;background:#fff"><span class="cell" style="position:absolute;left:2px;top:2px;transform:scaleX(0.97)">LP592 (Maxsyn) NEA2 (4front)</span></div>
<div class="a" style="left:464px;top:758px;width:63px;height:19px;overflow:hidden;background:transparent"><span class="cell" style="position:absolute;left:2px;top:2px;transform:scaleX(1.05)">Nucleus</span></div>
<div class="a" style="left:656px;top:758px;width:127px;height:19px;overflow:hidden;background:#fff"><span class="cell" style="position:absolute;left:2px;top:2px;transform:scaleX(1.04)">NZA Foundation</span></div>
<div class="a" style="left:911px;top:758px;width:63px;height:19px;overflow:hidden"><span class="cell" style="position:absolute;right:1px;top:2px;transform:scaleX(0.93);transform-origin:right center">248</span></div>
<div class="a" style="left:976px;top:758px;width:63px;height:19px;overflow:hidden;background:transparent"><span class="cell" style="position:absolute;left:2px;top:2px;transform:scaleX(0.97)">########</span></div>
<div class="a" style="left:1040px;top:758px;width:63px;height:19px;overflow:hidden;background:transparent"><span class="cell" style="position:absolute;left:2px;top:2px;transform:scaleX(0.97)">########</span></div>
<div class="a" style="left:144px;top:778px;width:127px;height:19px;overflow:hidden;background:#fff"><span class="cell" style="position:absolute;left:2px;top:2px;transform:scaleX(0.944)">SM100687.1</span></div>
<div class="a" style="left:272px;top:778px;width:63px;height:19px;overflow:hidden;background:transparent"><span class="cell" style="position:absolute;left:2px;top:2px;transform:scaleX(0.877)">CERTIFIED</span></div>
<div class="a" style="left:336px;top:778px;width:127px;height:19px;overflow:hidden;background:#fff"><span class="cell" style="position:absolute;left:2px;top:2px;transform:scaleX(1.025)">Interval Rape</span></div>
<div class="a" style="left:911px;top:778px;width:63px;height:19px;overflow:hidden"><span class="cell" style="position:absolute;right:1px;top:2px;transform:scaleX(0.93);transform-origin:right center">1575</span></div>
<div class="a" style="left:976px;top:778px;width:63px;height:19px;overflow:hidden;background:transparent"><span class="cell" style="position:absolute;left:2px;top:2px;transform:scaleX(0.97)">########</span></div>
<div class="a" style="left:1040px;top:778px;width:63px;height:19px;overflow:hidden;background:transparent"><span class="cell" style="position:absolute;left:2px;top:2px;transform:scaleX(0.97)">########</span></div>
<div class="a" style="left:1104px;top:778px;width:63px;height:19px;overflow:hidden;background:transparent"><span class="cell" style="position:absolute;left:2px;top:2px;transform:scaleX(0.97)">####</span></div>
<div class="a" style="left:144px;top:798px;width:127px;height:19px;overflow:hidden;background:#fff"><span class="cell" style="position:absolute;left:2px;top:2px;transform:scaleX(0.944)">SM100692.4</span></div>
<div class="a" style="left:272px;top:798px;width:63px;height:19px;overflow:hidden;background:transparent"><span class="cell" style="position:absolute;left:2px;top:2px;transform:scaleX(0.877)">CERTIFIED</span></div>
<div class="a" style="left:336px;top:798px;width:127px;height:19px;overflow:hidden;background:#fff"><span class="cell" style="position:absolute;left:2px;top:2px;transform:scaleX(0.97)">LP592 (Maxsyn) NEA3 (4front)</span></div>
<div class="a" style="left:464px;top:798px;width:63px;height:19px;overflow:hidden;background:transparent"><span class="cell" style="position:absolute;left:2px;top:2px;transform:scaleX(1.05)">Nucleus</span></div>
<div class="a" style="left:656px;top:798px;width:127px;height:19px;overflow:hidden;background:#fff"><span class="cell" style="position:absolute;left:2px;top:2px;transform:scaleX(1.04)">NZA Foundation</span></div>
<div class="a" style="left:911px;top:798px;width:63px;height:19px;overflow:hidden"><span class="cell" style="position:absolute;right:1px;top:2px;transform:scaleX(0.93);transform-origin:right center">251</span></div>
<div class="a" style="left:976px;top:798px;width:63px;height:19px;overflow:hidden;background:transparent"><span class="cell" style="position:absolute;left:2px;top:2px;transform:scaleX(0.97)">########</span></div>
<div class="a" style="left:1040px;top:798px;width:63px;height:19px;overflow:hidden;background:transparent"><span class="cell" style="position:absolute;left:2px;top:2px;transform:scaleX(0.97)">########</span></div>
<div class="a" style="left:144px;top:818px;width:127px;height:19px;overflow:hidden;background:#fff"><span class="cell" style="position:absolute;left:2px;top:2px;transform:scaleX(0.944)">SM100723.4</span></div>
<div class="a" style="left:272px;top:818px;width:63px;height:19px;overflow:hidden;background:transparent"><span class="cell" style="position:absolute;left:2px;top:2px;transform:scaleX(0.877)">CERTIFIED</span></div>
<div class="a" style="left:336px;top:818px;width:127px;height:19px;overflow:hidden;background:#fff"><span class="cell" style="position:absolute;left:2px;top:2px;transform:scaleX(0.97)">LPT987 NEA2 (4front)</span></div>
<div class="a" style="left:464px;top:818px;width:63px;height:19px;overflow:hidden;background:transparent"><span class="cell" style="position:absolute;left:2px;top:2px;transform:scaleX(1.05)">Nucleus</span></div>
<div class="a" style="left:656px;top:818px;width:127px;height:19px;overflow:hidden;background:#fff"><span class="cell" style="position:absolute;left:2px;top:2px;transform:scaleX(1.04)">NZA Foundation</span></div>
<div class="a" style="left:911px;top:818px;width:63px;height:19px;overflow:hidden"><span class="cell" style="position:absolute;right:1px;top:2px;transform:scaleX(0.93);transform-origin:right center">352</span></div>
<div class="a" style="left:976px;top:818px;width:63px;height:19px;overflow:hidden;background:transparent"><span class="cell" style="position:absolute;left:2px;top:2px;transform:scaleX(0.97)">########</span></div>
<div class="a" style="left:1040px;top:818px;width:63px;height:19px;overflow:hidden;background:transparent"><span class="cell" style="position:absolute;left:2px;top:2px;transform:scaleX(0.97)">########</span></div>
<!--/EXCEL-->
</body></html>
